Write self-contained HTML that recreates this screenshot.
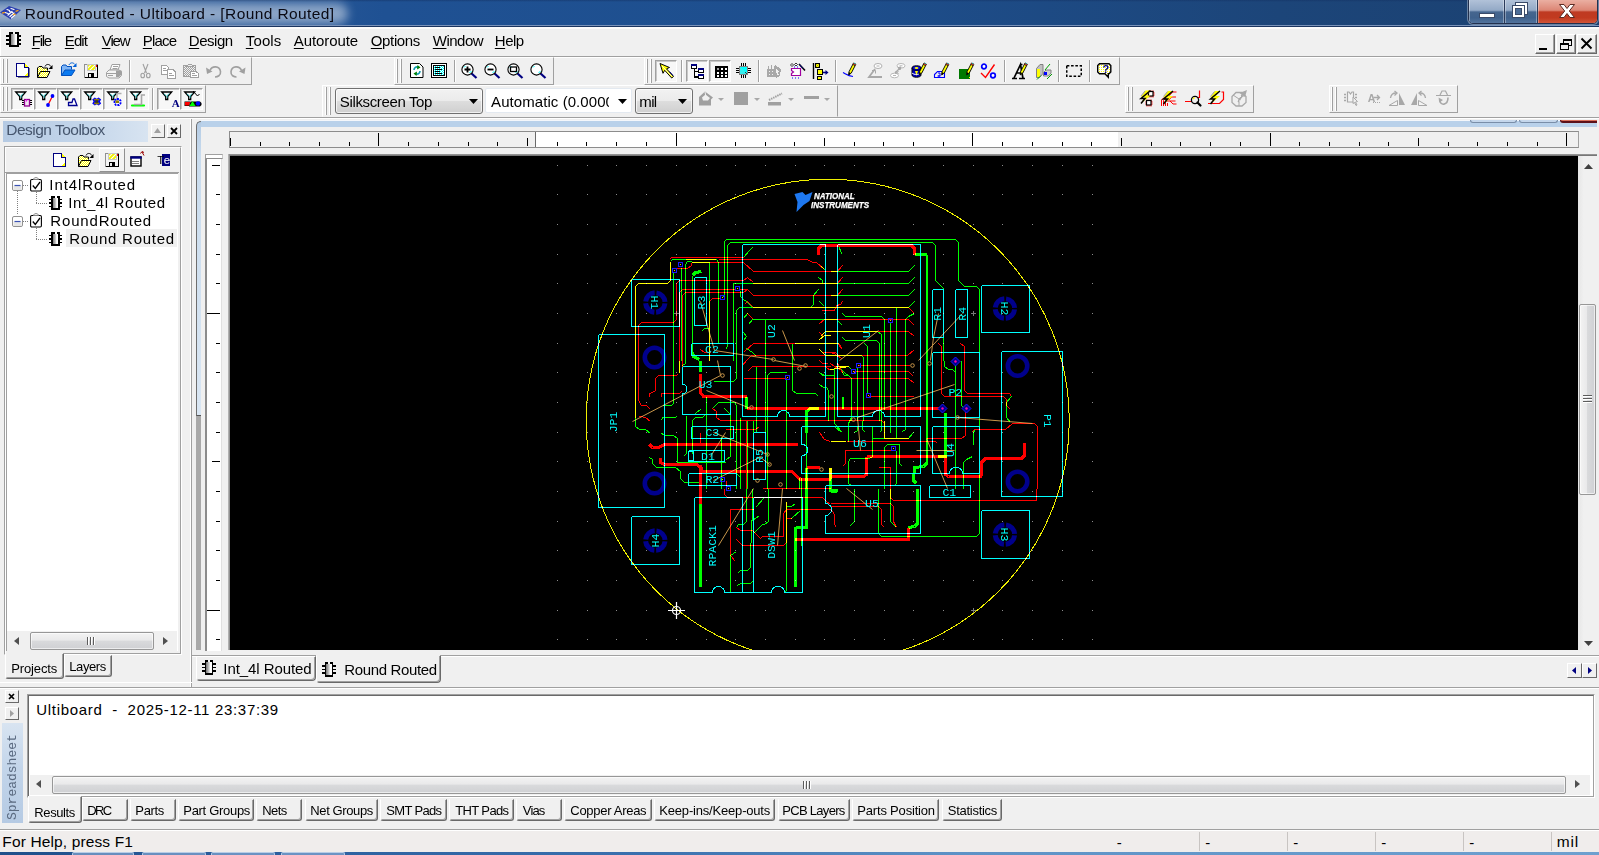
<!DOCTYPE html>
<html lang="en"><head><meta charset="utf-8"><title>RoundRouted - Ultiboard - [Round Routed]</title>
<style>
html,body{margin:0;padding:0}
body{width:1599px;height:855px;overflow:hidden;background:#f0f0f0;position:relative;font-family:"Liberation Sans",sans-serif;font-size:15px;color:#000}
div,span.t,svg{position:absolute;box-sizing:border-box}
span.t{white-space:pre;display:block}
u{text-decoration:underline;text-underline-offset:2px;text-decoration-thickness:1px}
.tb{border:1px solid;border-color:#fff #a0a0a0 #a0a0a0 #fff;background:#f0f0f0}
.grip{border-left:1px solid #fff;border-right:1px solid #a0a0a0}
.sunk{border:1px solid;border-color:#a0a0a0 #fff #fff #a0a0a0}
.rais{border:1px solid;border-color:#fff #696969 #696969 #fff;background:#f0f0f0}
svg{overflow:visible}

</style></head>
<body>
<!-- titlebar -->
<div style="left:0px;top:0px;width:1599px;height:27px;background:linear-gradient(to right,#3d679f 0,#1f5193 24%,#1e4f8e 50%,#1c4579 80%,#1b4171 100%);"></div>
<div style="left:0px;top:0px;width:1599px;height:2px;background:linear-gradient(to bottom,rgba(20,50,100,.55),rgba(20,50,100,0));"></div>
<div style="left:-14px;top:3px;width:362px;height:21px;background:rgba(255,255,255,.46);filter:blur(5px);border-radius:11px;"></div>
<div style="left:0px;top:25px;width:1599px;height:1px;background:#7a93ba"></div>
<div style="left:0px;top:26px;width:1599px;height:1px;background:#1b3560"></div>
<svg style="left:0;top:5px" width="22" height="16" viewBox="0 0 22 16">
<polygon points="0,7.5 9,1 21,5 11,14.5" fill="#2b3fb0"/>
<g stroke="#fff" stroke-width="1.2" stroke-linecap="round"><path d="M7 4.5l2.5 1M11 3.5l3 1M5 7.5l3 1M9.5 6.5l3 1M8 10l4-3.5M10 11.5l4-3.5M11.5 13l3.5-3"/></g>
<g stroke="#f5a21a" stroke-width="1.4"><path d="M2 8.2l3-.9M15.5 6.3l3-.9M13 9.8l2.5-.8"/></g>
</svg>
<span class="t" style="left:24.80px;top:3.88px;font-size:15.5px;line-height:19.5px;letter-spacing:0.397px;color:#0a0a14;">RoundRouted - Ultiboard - [Round Routed]</span>
<div style="left:1468px;top:-1px;width:130px;height:25px;border:1px solid #22304e;border-radius:0 0 5px 5px;background:#9fb3cf;box-shadow:0 0 0 1px rgba(255,255,255,.35);overflow:hidden"><div style="left:0px;top:-1px;width:36px;height:25px;background:linear-gradient(to bottom,#b4c4da 0,#93a9c6 45%,#46668f 52%,#3f618c 75%,#5576a0 100%);border-right:1px solid #2a3a5a;box-shadow:inset 0 0 0 1px rgba(255,255,255,.35)"></div><div style="left:36px;top:-1px;width:33px;height:25px;background:linear-gradient(to bottom,#b4c4da 0,#93a9c6 45%,#46668f 52%,#3f618c 75%,#5576a0 100%);border-right:1px solid #2a3a5a;box-shadow:inset 0 0 0 1px rgba(255,255,255,.35)"></div><div style="left:69px;top:-1px;width:60px;height:25px;background:linear-gradient(to bottom,#ecb3a6 0,#dc8675 45%,#bf3a22 52%,#c13a20 75%,#d4593c 100%);box-shadow:inset 0 0 0 1px rgba(255,255,255,.3)"></div></div>
<svg style="left:1468px;top:0" width="130" height="24" viewBox="0 0 130 24">
<rect x="11.500" y="13.500" width="15" height="4" fill="#fff" stroke="#3a4a68" stroke-width="1"/>
<g fill="none" stroke="#3a4a68" stroke-width="1"><rect x="47.500" y="2.500" width="12" height="12" fill="#fff"/><rect x="50.500" y="5.500" width="6" height="6" fill="#7f97b8"/>
<rect x="44.500" y="5.500" width="12" height="12" fill="#fff"/><rect x="47.500" y="8.500" width="6" height="6" fill="#4d6d97"/></g>
<path d="M91.500 4.500h4.500l3 4 3-4h4.500l-5.200 6.500 5.200 6.500h-4.500l-3-4-3 4h-4.500l5.200-6.500z" fill="#fff" stroke="#5a2a22" stroke-width="1" stroke-linejoin="round"/>
</svg>
<!-- menubar -->
<div style="left:0px;top:27px;width:1599px;height:2px;background:#fbfbfb"></div>
<div style="left:0px;top:27px;width:1px;height:29px;background:#fff"></div>
<div style="left:0px;top:56px;width:1599px;height:1px;background:#a0a0a0"></div>
<div style="left:0px;top:57px;width:1599px;height:1px;background:#fff"></div>
<svg style="left:6px;top:32px" width="16" height="16" viewBox="0 0 16 16" shape-rendering="crispEdges">
<defs><linearGradient id="cg0" x1="0" x2="1" y1="0" y2="0"><stop offset="0" stop-color="#666"/><stop offset=".5" stop-color="#c8c8c8"/><stop offset=".7" stop-color="#fff"/></linearGradient></defs>
<path d="M0 4h4M0 8h4M0 12h4M12 4h3M12 8h3M12 12h3" stroke="#000" stroke-width="2"/>
<rect x="4" y="1" width="8" height="13" fill="url(#cg0)" stroke="#000" stroke-width="2"/>
<rect x="7" y="0" width="2" height="2" fill="#f0f0f0"/>
</svg>
<span class="t" style="left:31.80px;top:30.80px;font-size:15px;line-height:19px;letter-spacing:-1.276px;color:#000;"><u>F</u>ile</span>
<span class="t" style="left:64.80px;top:30.80px;font-size:15px;line-height:19px;letter-spacing:-0.893px;color:#000;"><u>E</u>dit</span>
<span class="t" style="left:101.80px;top:30.80px;font-size:15px;line-height:19px;letter-spacing:-1.136px;color:#000;"><u>V</u>iew</span>
<span class="t" style="left:142.80px;top:30.80px;font-size:15px;line-height:19px;letter-spacing:-0.795px;color:#000;"><u>P</u>lace</span>
<span class="t" style="left:188.80px;top:30.80px;font-size:15px;line-height:19px;letter-spacing:-0.470px;color:#000;"><u>D</u>esign</span>
<span class="t" style="left:245.80px;top:30.80px;font-size:15px;line-height:19px;letter-spacing:0.121px;color:#000;"><u>T</u>ools</span>
<span class="t" style="left:293.80px;top:30.80px;font-size:15px;line-height:19px;letter-spacing:-0.088px;color:#000;"><u>A</u>utoroute</span>
<span class="t" style="left:370.80px;top:30.80px;font-size:15px;line-height:19px;letter-spacing:-0.366px;color:#000;"><u>O</u>ptions</span>
<span class="t" style="left:432.80px;top:30.80px;font-size:15px;line-height:19px;letter-spacing:-0.503px;color:#000;"><u>W</u>indow</span>
<span class="t" style="left:494.80px;top:30.80px;font-size:15px;line-height:19px;letter-spacing:-0.502px;color:#000;"><u>H</u>elp</span>
<div style="left:1535px;top:34px;width:20px;height:20px;border:1px solid;border-color:#fff #696969 #696969 #fff;box-shadow:inset -1px -1px 0 #a0a0a0;background:#f0f0f0"></div>
<div style="left:1556px;top:34px;width:20px;height:20px;border:1px solid;border-color:#fff #696969 #696969 #fff;box-shadow:inset -1px -1px 0 #a0a0a0;background:#f0f0f0"></div>
<div style="left:1577px;top:34px;width:20px;height:20px;border:1px solid;border-color:#fff #696969 #696969 #fff;box-shadow:inset -1px -1px 0 #a0a0a0;background:#f0f0f0"></div>
<svg style="left:1535px;top:34px" width="64" height="20" viewBox="0 0 64 20" shape-rendering="crispEdges">
<rect x="4" y="14" width="8" height="2" fill="#000"/>
<g fill="none" stroke="#000"><rect x="28.500" y="5.500" width="8" height="6"/><path d="M28.500 6.500h8" /><rect x="25.500" y="9.500" width="8" height="6" fill="#f0f0f0"/><path d="M25.500 10.500h8"/></g>
</svg>
<svg style="left:1577px;top:34px" width="20" height="20" viewBox="0 0 20 20"><path d="M4.500 4.500l10 10M14.500 4.500l-10 10" stroke="#000" stroke-width="1.900" fill="none"/></svg>
<!-- toolbars -->
<div class="tb" style="left:0px;top:57px;width:252px;height:28px;"></div><div class="grip" style="left:2px;top:59px;width:2px;height:24px;"></div><div class="grip" style="left:6px;top:59px;width:2px;height:24px;"></div>
<svg style="left:16px;top:63px" width="16" height="16" viewBox="0 0 16 16" shape-rendering="crispEdges"><path d="M2 13.500h11v1h-11zM13 5v9h1v-9z" fill="#808080"/><path d="M.500 .500h8l4 4v8.500h-12z" fill="#fff" stroke="#000080"/><path d="M8.500 .500v4h4" fill="#ff0" stroke="#000080"/><path d="M12 9v3.500h-3.500z" fill="#ff0"/></svg>
<svg style="left:37px;top:63px" width="17" height="16" viewBox="0 0 17 16"><defs><pattern id="dy" width="2" height="2" patternUnits="userSpaceOnUse"><rect width="2" height="2" fill="#ff0"/><rect width="1" height="1" fill="#fff"/><rect x="1" y="1" width="1" height="1" fill="#fff"/></pattern></defs>
<path d="M.500 14.500v-9.500l1.500-1.500h3l1 1.500h4.500v2.500" fill="url(#dy)" stroke="#000"/><path d="M.500 14.500l3-6h9.500l-3 6z" fill="url(#dy)" stroke="#000"/>
<path d="M8 3.500c1-2.500 4-3 6 0" fill="none" stroke="#000"/><path d="M15.500 2v4h-4z" fill="#000"/></svg>
<svg style="left:61px;top:62px" width="17" height="16" viewBox="0 0 17 16"><path d="M.500 13.500v-9l1.500-1.500h3l1 1.500h4.500v3" fill="#7fb5f5" stroke="#0050c0"/><path d="M.500 13.500l3.500-5.500h10l-3.500 5.500z" fill="#0a7af0" stroke="#0050c0"/>
<path d="M8 3c1-2.500 4-3 6-.5" fill="none" stroke="#0060d8"/><path d="M15.500 1v4h-4z" fill="#0060d8"/></svg>
<svg style="left:84px;top:64px" width="15" height="15" viewBox="0 0 15 15" shape-rendering="crispEdges"><defs><pattern id="hy" width="3" height="3" patternUnits="userSpaceOnUse" patternTransform="rotate(45)"><rect width="3" height="3" fill="#fff"/><rect width="1.500" height="3" fill="#f0f000"/></pattern></defs>
<rect x=".5" y=".5" width="13" height="13" fill="#f4f4f4" stroke="#909090"/><path d="M1 13.500h13M13.500 1v13" stroke="#000" fill="none"/><rect x="3.500" y=".5" width="8" height="6" fill="url(#hy)" stroke="#c8c8c8"/>
<rect x="12" y="1" width="1" height="2" fill="#f00"/><rect x="4" y="9" width="6" height="5" fill="#000"/><rect x="5" y="10" width="2" height="3" fill="#e8e8e8"/></svg>
<svg style="left:106px;top:64px" width="17" height="15" viewBox="0 0 17 15"><path d="M4 6l2-5.500h8l-2 5.500z" fill="#fff" stroke="#a0a0a0"/><path d="M7 2.500h5M6.500 4.500h5" stroke="#a0a0a0"/>
<path d="M.500 12.500v-4l2.500-2.500h10l2.500 1.500v4l-2.500 2.500h-10z" fill="#f4f4f4" stroke="#a0a0a0"/><path d="M10 6.500h5.500v4l-2.500 2.500h-3z" fill="#a0a0a0"/><path d="M1 9.500h9M2 11.500h5" stroke="#a0a0a0"/></svg>
<div style="left:129px;top:60px;width:1px;height:22px;background:#a0a0a0"></div><div style="left:130px;top:60px;width:1px;height:22px;background:#fff"></div>
<svg style="left:140px;top:64px" width="12" height="15" viewBox="0 0 12 15"><g fill="none" stroke="#a0a0a0" stroke-width="1.100"><path d="M3 0l3.500 9M8 0l-3.500 9"/><ellipse cx="2.700" cy="11.500" rx="1.800" ry="2.300"/><ellipse cx="8.300" cy="11.500" rx="1.800" ry="2.300"/></g></svg>
<svg style="left:161px;top:65px" width="16" height="14" viewBox="0 0 16 14" shape-rendering="crispEdges"><g fill="#fff" stroke="#a0a0a0"><path d="M.500 .500h5l2 2v6.500h-7z"/><path d="M6.500 4.500h5.500l2.500 2.500v6h-8z"/></g><path d="M2 3.500h3M2 5.500h4M8 8.500h3M8 10.500h5" stroke="#a0a0a0"/></svg>
<svg style="left:183px;top:64px" width="17" height="15" viewBox="0 0 17 15" shape-rendering="crispEdges"><defs><pattern id="dg" width="2" height="2" patternUnits="userSpaceOnUse"><rect width="2" height="2" fill="#f0f0f0"/><rect width="1" height="1" fill="#a0a0a0"/><rect x="1" y="1" width="1" height="1" fill="#a0a0a0"/></pattern></defs>
<rect x=".5" y="1.500" width="12" height="11" fill="url(#dg)" stroke="#a0a0a0"/><path d="M4 2.500l1.500-2h3l1.500 2z" fill="#f0f0f0" stroke="#a0a0a0"/>
<path d="M7.500 7.500h5.500l2.500 2v4h-8z" fill="#fff" stroke="#a0a0a0"/><path d="M9 9.500h3M9 11.500h5" stroke="#a0a0a0"/></svg>
<svg style="left:206px;top:64px" width="17" height="15" viewBox="0 0 17 15"><path d="M4 6.500c2-5 9.500-5 10.500 1c.5 4-3 5.500-5.500 5.500" fill="none" stroke="#a0a0a0" stroke-width="1.600"/><path d="M0 3.500l1 6.500 5.500-2.500z" fill="#a0a0a0"/></svg>
<svg style="left:229px;top:64px" width="17" height="15" viewBox="0 0 17 15"><path d="M12.500 6.500c-2-5-9.500-5-10.500 1c-.5 4 3 5.500 5.500 5.500" fill="none" stroke="#a0a0a0" stroke-width="1.600"/><path d="M16.500 3.500l-1 6.500-5.500-2.500z" fill="#a0a0a0"/></svg>
<div class="tb" style="left:394px;top:57px;width:160px;height:28px;"></div><div class="grip" style="left:396px;top:59px;width:2px;height:24px;"></div><div class="grip" style="left:400px;top:59px;width:2px;height:24px;"></div>
<svg style="left:410px;top:63px" width="14" height="15" viewBox="0 0 14 15"><path d="M.500 .500h9l3.500 3.500v10.500h-12.500z" fill="#fff" stroke="#000"/><path d="M1 14.500h12" stroke="#000"/>
<g fill="none" stroke-width="1.600"><path d="M4 7c0-2.500 2.500-4 5-2.500" stroke="#0a9ab0"/><path d="M10 8c0 2.500-2.500 4-5 2.500" stroke="#0a9ab0"/></g><path d="M7.500 2l3 2.500-3.500 2z" fill="#008000"/><path d="M6.500 13l-3-2.500 3.500-2z" fill="#008000"/></svg>
<svg style="left:431px;top:63px" width="16" height="15" viewBox="0 0 16 15" shape-rendering="crispEdges"><defs><pattern id="dc" width="2" height="2" patternUnits="userSpaceOnUse"><rect width="2" height="2" fill="#0ff"/><rect width="1" height="1" fill="#fff"/><rect x="1" y="1" width="1" height="1" fill="#fff"/></pattern></defs>
<rect x=".5" y=".5" width="15" height="14" fill="#fff" stroke="#000"/><rect x="2.500" y="2.500" width="11" height="10" fill="url(#dc)" stroke="#000"/><path d="M4 4.500h5M4 6.500h7M4 8.500h5M4 10.500h7" stroke="#000"/></svg>
<div style="left:454px;top:60px;width:1px;height:22px;background:#a0a0a0"></div><div style="left:455px;top:60px;width:1px;height:22px;background:#fff"></div>
<svg style="left:461px;top:62.5px" width="17" height="17" viewBox="0 0 17 17"><path d="M10 10l5.500 5" stroke="#000080" stroke-width="2.200" fill="none"/><circle cx="6.500" cy="6.500" r="5.600" fill="#fff" stroke="#000" stroke-width="1.100"/><path d="M3 4.500l1.500-1.500M8.500 10l2-2" stroke="#0ff"/><path d="M3.500 6.500h6M6.500 3.500v6" stroke="#000" stroke-width="1.800"/></svg>
<svg style="left:484px;top:62.5px" width="17" height="17" viewBox="0 0 17 17"><path d="M10 10l5.500 5" stroke="#000080" stroke-width="2.200" fill="none"/><circle cx="6.500" cy="6.500" r="5.600" fill="#fff" stroke="#000" stroke-width="1.100"/><path d="M3 4.500l1.500-1.500M8.500 10l2-2" stroke="#0ff"/><path d="M3.500 6.500h6" stroke="#000" stroke-width="1.800"/></svg>
<svg style="left:507px;top:62.5px" width="17" height="17" viewBox="0 0 17 17"><path d="M10 10l5.500 5" stroke="#000080" stroke-width="2.200" fill="none"/><circle cx="6.500" cy="6.500" r="5.600" fill="#fff" stroke="#000" stroke-width="1.100"/><path d="M3 4.500l1.500-1.500M8.500 10l2-2" stroke="#0ff"/><rect x="3.500" y="4" width="6" height="4.500" fill="none" stroke="#000" stroke-width="1.300"/></svg>
<svg style="left:530px;top:62.5px" width="17" height="17" viewBox="0 0 17 17"><path d="M10 10l5.500 5" stroke="#000080" stroke-width="2.200" fill="none"/><circle cx="6.500" cy="6.500" r="5.600" fill="#fff" stroke="#000" stroke-width="1.100"/><path d="M3 4.500l1.500-1.500M8.500 10l2-2" stroke="#0ff"/></svg>
<div class="tb" style="left:644px;top:57px;width:476px;height:28px;"></div><div class="grip" style="left:646px;top:59px;width:2px;height:24px;"></div><div class="grip" style="left:650px;top:59px;width:2px;height:24px;"></div>
<div style="left:655px;top:60px;width:22px;height:22px;background:#f7f7f7;border:1px solid;border-color:#a0a0a0 #fff #fff #a0a0a0;box-shadow:inset 1px 1px 0 #c8c8c8"></div>
<svg style="left:659px;top:63px" width="16" height="16" viewBox="0 0 16 16"><path d="M1 .500l9.500 4-3 1.300 7 7.700-1.800 1.500-7-7.700-1.700 3z" fill="#ff0" stroke="#000" stroke-width="1" stroke-linejoin="round"/><path d="M3 3l10 10.500" stroke="#fff" stroke-width=".8"/><path d="M10.500 8.500l3.500 4" stroke="#000080" stroke-width="1"/></svg>
<div style="left:681px;top:60px;width:1px;height:22px;background:#a0a0a0"></div><div style="left:682px;top:60px;width:1px;height:22px;background:#fff"></div>
<div style="left:686px;top:60px;width:22px;height:22px;background:#f7f7f7;border:1px solid;border-color:#a0a0a0 #fff #fff #a0a0a0;box-shadow:inset 1px 1px 0 #c8c8c8"></div>
<div style="left:709px;top:60px;width:22px;height:22px;background:#f7f7f7;border:1px solid;border-color:#a0a0a0 #fff #fff #a0a0a0;box-shadow:inset 1px 1px 0 #c8c8c8"></div>
<svg style="left:691px;top:63px" width="14" height="16" viewBox="0 0 14 16" shape-rendering="crispEdges"><path d="M3.500 5v9h4M3.500 8.500h4" fill="none" stroke="#000" stroke-width="1.200"/><g fill="#fff" stroke="#000"><rect x=".5" y="1.500" width="5" height="4"/><rect x="7.500" y="5.500" width="5" height="4"/><rect x="7.500" y="11.500" width="5" height="4"/></g><path d="M0 1h6v2h-6zM7 5h6v2h-6zM7 11h6v2h-6z" fill="#000080"/></svg>
<svg style="left:715px;top:66px" width="13" height="12" viewBox="0 0 13 12" shape-rendering="crispEdges"><rect width="13" height="12" fill="#000"/><g fill="#fff"><rect x="2" y="2" width="2" height="2" fill="#a0a0a0"/><rect x="6" y="2" width="2" height="2"/><rect x="10" y="2" width="2" height="2"/><rect x="2" y="6" width="2" height="2"/><rect x="6" y="6" width="2" height="2"/><rect x="10" y="6" width="2" height="2"/><rect x="2" y="9" width="2" height="2"/><rect x="6" y="9" width="2" height="2"/><rect x="10" y="9" width="2" height="2"/></g></svg>
<svg style="left:736px;top:63px" width="16" height="15" viewBox="0 0 16 15" shape-rendering="crispEdges"><path d="M5.500 0v15M7.500 0v15M9.500 0v15M0 5.500h15M0 7.500h15M0 9.500h15" stroke="#000"/><path d="M5 3v9M7 3v9M9 3v9M3 5h9M3 7h9M3 9h9" stroke="#c8a000"/><rect x="3.500" y="3.500" width="8" height="8" fill="#3ee" stroke="#808080"/><path d="M4 4h7v7z" fill="#0ff"/><path d="M9 9l2 2" stroke="#404040"/></svg>
<div style="left:758px;top:60px;width:1px;height:22px;background:#a0a0a0"></div><div style="left:759px;top:60px;width:1px;height:22px;background:#fff"></div>
<svg style="left:766px;top:63px" width="16" height="16" viewBox="0 0 16 16" shape-rendering="crispEdges"><g fill="#a8a8a8"><path d="M1 6h9v8h-9zM9 2l6 4-1 7-4 2z"/><path d="M2 3h1v3h-1zM5 2h1v4h-1zM8 3h1v3h-1z"/></g><g fill="#f0f0f0"><rect x="3" y="8" width="1" height="1"/><rect x="6" y="8" width="1" height="1"/><rect x="3" y="11" width="1" height="1"/><rect x="6" y="11" width="1" height="1"/><path d="M10 6l3 3-1.500 .5 1 2-1 .5-1-2-1 1z"/></g></svg>
<svg style="left:789px;top:63px" width="17" height="16" viewBox="0 0 17 16"><path d="M2.500 5.500h9v7h-9v-2l2-1.500-2-1.500z" fill="#fff" stroke="#a000a0" stroke-width="1.200"/><path d="M3 15h1M6 15h1M9 15h1M5 4h1M8 4h1" stroke="#00f"/><path d="M10 1l6 6.500" stroke="#000" stroke-width="1.600"/><path d="M10.500 1.500l3.500 4" stroke="#000080"/><path d="M1.500 2l1.500-1.500 1.500 1.500-1.500 1.500zM5.500 1.500l1.500-1.500 1.500 1.500-1.500 1.500z" fill="#fff" stroke="#000" stroke-width=".8"/></svg>
<svg style="left:812px;top:63px" width="17" height="17" viewBox="0 0 17 17"><path d="M1.500 0v16" stroke="#000" stroke-width="1.400"/><g fill="#ff0" stroke="#000"><rect x="3.500" y=".5" width="4" height="4"/><rect x="5.500" y="6.500" width="5" height="5"/><rect x="5.500" y="13.500" width="4" height="3"/></g><path d="M4 1l3 3M7 1l-3 3" stroke="#a0a000" stroke-width=".6"/><path d="M11 9.500h3" stroke="#000080" stroke-width="1.600"/><path d="M13.500 7l3 2.500-3 2.500z" fill="#000080"/></svg>
<div style="left:835px;top:60px;width:1px;height:22px;background:#a0a0a0"></div><div style="left:836px;top:60px;width:1px;height:22px;background:#fff"></div>
<svg style="left:843px;top:63px" width="17" height="16" viewBox="0 0 17 16"><path d="M0 9.500c3 1.500 5 3.500 10 4" fill="none" stroke="#00f" stroke-width="1.100"/><g transform="translate(5.5 0) scale(.92)"><path d="M5.500 0l2.500 1.300-5 9.700-2.800 2 .3-3.400z" fill="#ff0" stroke="#000" stroke-width="1"/><path d="M4.700 1.500l2.500 1.300" stroke="#000"/><path d="M5.500 0l2.500 1.300-.7 1.400-2.500-1.300z" fill="#c03030"/><path d="M6 0l1.500 .8" stroke="#0cc"/><path d="M.5 10l2 1-2.300 2z" fill="#000"/></g></svg>
<svg style="left:867px;top:63px" width="16" height="16" viewBox="0 0 16 16"><ellipse cx="11" cy="3" rx="4" ry="2.500" fill="#fff" stroke="#b0b0b0"/><path d="M9.500 3h3" stroke="#b0b0b0"/><path d="M8 6l-6 8h13" fill="none" stroke="#a8a8a8" stroke-width="1.800"/><path d="M5 7.500h3.500v3" fill="none" stroke="#a8a8a8"/></svg>
<svg style="left:890px;top:63px" width="16" height="16" viewBox="0 0 16 16"><ellipse cx="11" cy="2.800" rx="4" ry="2.300" fill="#fff" stroke="#b8b8b8"/><ellipse cx="4.500" cy="12.500" rx="4" ry="2.300" fill="#fff" stroke="#b8b8b8"/><path d="M9.500 2.800h3M3 12.500h3" stroke="#b8b8b8"/><path d="M5 10l5-5" stroke="#a8a8a8" stroke-width="1.300"/><path d="M8 4.500l3-.5-1 3zM5.500 8l3 3M8.500 8l-3 3" stroke="#a8a8a8" fill="#a8a8a8"/></svg>
<svg style="left:911px;top:63px" width="18" height="16" viewBox="0 0 18 16"><path d="M1 5v7c0 3 9 3 9 0v-7z" fill="#0000c0" stroke="#000"/><ellipse cx="5.500" cy="5" rx="4.500" ry="2.200" fill="#0000e0" stroke="#000"/><ellipse cx="5.500" cy="5" rx="2" ry="1" fill="#ff0"/><path d="M4 8l1.500 5 1.500-5z" fill="#ff0"/><path d="M1 10c2 2 7 2 9 0" stroke="#fff" fill="none"/><g transform="translate(8 0) scale(.92)"><path d="M5.500 0l2.500 1.300-5 9.700-2.800 2 .3-3.400z" fill="#ff0" stroke="#000" stroke-width="1"/><path d="M4.700 1.500l2.500 1.300" stroke="#000"/><path d="M5.500 0l2.500 1.300-.7 1.400-2.500-1.300z" fill="#c03030"/><path d="M6 0l1.500 .8" stroke="#0cc"/><path d="M.5 10l2 1-2.300 2z" fill="#000"/></g></svg>
<svg style="left:934px;top:63px" width="17" height="16" viewBox="0 0 17 16"><path d="M.500 14.500v-3l3-3h5l2 2v4z" fill="none" stroke="#00f" stroke-width="1.100"/><path d="M4 10h2v3h-2M3.500 13h3" stroke="#00f" fill="none"/><g transform="translate(7.5 0) scale(.92)"><path d="M5.500 0l2.500 1.300-5 9.700-2.800 2 .3-3.400z" fill="#ff0" stroke="#000" stroke-width="1"/><path d="M4.700 1.500l2.500 1.300" stroke="#000"/><path d="M5.500 0l2.500 1.300-.7 1.400-2.500-1.300z" fill="#c03030"/><path d="M6 0l1.500 .8" stroke="#0cc"/><path d="M.5 10l2 1-2.300 2z" fill="#000"/></g></svg>
<svg style="left:959px;top:63px" width="17" height="16" viewBox="0 0 17 16"><rect x="0" y="6" width="11" height="10" fill="#007800"/><path d="M10 14l1 1" stroke="#ff0"/><g transform="translate(7.5 0) scale(.92)"><path d="M5.500 0l2.500 1.300-5 9.700-2.800 2 .3-3.400z" fill="#ff0" stroke="#000" stroke-width="1"/><path d="M4.700 1.500l2.500 1.300" stroke="#000"/><path d="M5.500 0l2.500 1.300-.7 1.400-2.500-1.300z" fill="#c03030"/><path d="M6 0l1.500 .8" stroke="#0cc"/><path d="M.5 10l2 1-2.300 2z" fill="#000"/></g></svg>
<svg style="left:980px;top:63px" width="17" height="16" viewBox="0 0 17 16"><circle cx="4" cy="3.500" r="2.300" fill="#fff" stroke="#00f" stroke-width="1.700"/><circle cx="13" cy="12.500" r="2.300" fill="#fff" stroke="#00f" stroke-width="1.700"/><path d="M1 10l4.500 4.500 9-13" fill="none" stroke="#f00" stroke-width="1.400"/></svg>
<div style="left:1004px;top:60px;width:1px;height:22px;background:#a0a0a0"></div><div style="left:1005px;top:60px;width:1px;height:22px;background:#fff"></div>
<svg style="left:1012px;top:63px" width="17" height="16" viewBox="0 0 17 16"><path d="M0 15.500h5M7 15.500h6M2 15l6.500-13.500 2.500 14M5 10h5" fill="none" stroke="#000" stroke-width="1.700"/><path d="M8.500 1.500h2" stroke="#000" stroke-width="1.400"/><g transform="translate(8 0) scale(.92)"><path d="M5.500 0l2.500 1.300-5 9.700-2.800 2 .3-3.400z" fill="#ff0" stroke="#000" stroke-width="1"/><path d="M4.700 1.500l2.500 1.300" stroke="#000"/><path d="M5.500 0l2.500 1.300-.7 1.400-2.500-1.300z" fill="#c03030"/><path d="M6 0l1.500 .8" stroke="#0cc"/><path d="M.5 10l2 1-2.300 2z" fill="#000"/></g></svg>
<svg style="left:1036px;top:63px" width="17" height="17" viewBox="0 0 17 17"><path d="M.500 5.500l3.500-4h3v9l-3.500 4h-3z" fill="#c0c0c0" stroke="#808080"/><rect x="1" y="6" width="3" height="8" fill="#ff0"/><path d="M7.500 9.500l2.500-2.500h5v3l-2.500 3h-5z" fill="#d0d0d0" stroke="#808080"/><rect x="8" y="9" width="3" height="3" fill="#00f"/><path d="M9 7l5-6M1 16.500l4-4M11 16l5-5" stroke="#00a000" stroke-width="1"/></svg>
<div style="left:1058px;top:60px;width:1px;height:22px;background:#a0a0a0"></div><div style="left:1059px;top:60px;width:1px;height:22px;background:#fff"></div>
<svg style="left:1066px;top:65px" width="16" height="12" viewBox="0 0 16 12"><rect x=".75" y=".75" width="14.500" height="10.500" fill="none" stroke="#000" stroke-width="1.500" stroke-dasharray="2.600 1.700"/></svg>
<div style="left:1089px;top:60px;width:1px;height:22px;background:#a0a0a0"></div><div style="left:1090px;top:60px;width:1px;height:22px;background:#fff"></div>
<svg style="left:1097px;top:63px" width="15" height="15" viewBox="0 0 15 15"><defs><pattern id="dq" width="2" height="2" patternUnits="userSpaceOnUse"><rect width="2" height="2" fill="#fff"/><rect width="1" height="1" fill="#ff0"/></pattern></defs><path d="M2.500 .7h9.500l1.800 1.800v6.500l-1.800 1.800h-.7v3.400l-3.400-3.400h-5.400l-1.800-1.800v-6.500z" fill="url(#dq)" stroke="#000" stroke-width="1.400"/></svg><span class="t" style="left:1102.60px;top:61.69px;font-size:11px;line-height:15px;letter-spacing:0.000px;color:#000080;font-weight:bold;">?</span>
<div class="tb" style="left:0px;top:85px;width:206px;height:28px;"></div><div class="grip" style="left:2px;top:87px;width:2px;height:24px;"></div><div class="grip" style="left:6px;top:87px;width:2px;height:24px;"></div>
<div style="left:11px;top:88px;width:23px;height:22px;background:#f7f7f7;border:1px solid;border-color:#a0a0a0 #fff #fff #a0a0a0;box-shadow:inset 1px 1px 0 #c8c8c8"></div><svg style="left:15px;top:91px" width="18" height="17" viewBox="0 0 18 17"><path d="M.700 1h10l-4 4.500v3h-2v-3z" fill="#fcfcfc" stroke="#000" stroke-width="1.300"/><path d="M3.200 2.800l2 2.200M8 2.500l-1.800 2.300v2" stroke="#0bb" stroke-width=".8" fill="none"/><path d="M7 9.500h10M7 11.500h10M7 13.500h10" stroke="#000"/><rect x="9.500" y="8.500" width="5" height="6.500" fill="#f4e4f4" stroke="#900090" stroke-width="1.300"/><path d="M11.500 8.500v2" stroke="#f0f"/></svg>
<div style="left:34px;top:88px;width:23px;height:22px;background:#f7f7f7;border:1px solid;border-color:#a0a0a0 #fff #fff #a0a0a0;box-shadow:inset 1px 1px 0 #c8c8c8"></div><svg style="left:38px;top:91px" width="18" height="17" viewBox="0 0 18 17"><path d="M.700 1h10l-4 4.500v3h-2v-3z" fill="#fcfcfc" stroke="#000" stroke-width="1.300"/><path d="M3.200 2.800l2 2.200M8 2.500l-1.800 2.300v2" stroke="#0bb" stroke-width=".8" fill="none"/><path d="M10 14l4.500-9" stroke="#f00" stroke-width="1.200"/><circle cx="14.500" cy="5" r="1.900" fill="#00f"/><circle cx="10" cy="14" r="1.900" fill="#00f"/></svg>
<div style="left:57px;top:88px;width:23px;height:22px;background:#f7f7f7;border:1px solid;border-color:#a0a0a0 #fff #fff #a0a0a0;box-shadow:inset 1px 1px 0 #c8c8c8"></div><svg style="left:61px;top:91px" width="18" height="17" viewBox="0 0 18 17"><path d="M.700 1h10l-4 4.500v3h-2v-3z" fill="#fcfcfc" stroke="#000" stroke-width="1.300"/><path d="M3.200 2.800l2 2.200M8 2.500l-1.800 2.300v2" stroke="#0bb" stroke-width=".8" fill="none"/><path d="M7.500 14.500v-3h3.500l1-3.500h1.500l2.500 6.500z" fill="#fff" stroke="#000090" stroke-width="1.300"/></svg>
<div style="left:80px;top:88px;width:23px;height:22px;background:#f7f7f7;border:1px solid;border-color:#a0a0a0 #fff #fff #a0a0a0;box-shadow:inset 1px 1px 0 #c8c8c8"></div><svg style="left:84px;top:91px" width="18" height="17" viewBox="0 0 18 17"><path d="M.700 1h10l-4 4.500v3h-2v-3z" fill="#fcfcfc" stroke="#000" stroke-width="1.300"/><path d="M3.200 2.800l2 2.200M8 2.500l-1.800 2.300v2" stroke="#0bb" stroke-width=".8" fill="none"/><g transform="translate(-3.300 -3.600) scale(1.280)"><path d="M9 9.500l2-1.700 1.500 1 1.500-1 2 1.700-1 1.500 1 1.500-2 1.700-1.500-1-1.500 1-2-1.700 1-1.500z" fill="#00f"/><rect x="10.500" y="9" width="4" height="1.200" fill="#908000"/><rect x="10.500" y="11.800" width="4" height="1.400" fill="#908000"/><rect x="11.500" y="10" width="2" height="2" fill="#404000"/></g></svg>
<div style="left:103px;top:88px;width:23px;height:22px;background:#f7f7f7;border:1px solid;border-color:#a0a0a0 #fff #fff #a0a0a0;box-shadow:inset 1px 1px 0 #c8c8c8"></div><svg style="left:107px;top:91px" width="18" height="17" viewBox="0 0 18 17"><path d="M.700 1h10l-4 4.500v3h-2v-3z" fill="#fcfcfc" stroke="#000" stroke-width="1.300"/><path d="M3.200 2.800l2 2.200M8 2.500l-1.800 2.300v2" stroke="#0bb" stroke-width=".8" fill="none"/><path d="M10 11v-8.500h4.500" fill="none" stroke="#b0b0b0" stroke-width="1.600"/><path d="M7.500 9.500l1.500-1.500h3l1.500 1.500v3l-1.500 1.500h-3l-1.500-1.500z" fill="none" stroke="#00f" stroke-width="1.800" stroke-dasharray="2 1"/><rect x="8.500" y="9.500" width="3.500" height="2.500" fill="#908000"/></svg>
<div style="left:126px;top:88px;width:23px;height:22px;background:#f7f7f7;border:1px solid;border-color:#a0a0a0 #fff #fff #a0a0a0;box-shadow:inset 1px 1px 0 #c8c8c8"></div><svg style="left:130px;top:91px" width="18" height="17" viewBox="0 0 18 17"><path d="M.700 1h10l-4 4.500v3h-2v-3z" fill="#fcfcfc" stroke="#000" stroke-width="1.300"/><path d="M3.200 2.800l2 2.200M8 2.500l-1.800 2.300v2" stroke="#0bb" stroke-width=".8" fill="none"/><path d="M2 14.500h12" stroke="#0f0" stroke-width="2.200" stroke-linecap="round"/><path d="M4 13.500h7.500v-9.500h3.500" fill="none" stroke="#a8a8a8" stroke-width="1.600"/></svg>
<div style="left:152px;top:88px;width:1px;height:22px;background:#a0a0a0"></div><div style="left:153px;top:88px;width:1px;height:22px;background:#fff"></div>
<div style="left:157px;top:88px;width:23px;height:22px;background:#f7f7f7;border:1px solid;border-color:#a0a0a0 #fff #fff #a0a0a0;box-shadow:inset 1px 1px 0 #c8c8c8"></div><svg style="left:161px;top:91px" width="18" height="17" viewBox="0 0 18 17"><path d="M.700 1h10l-4 4.500v3h-2v-3z" fill="#fcfcfc" stroke="#000" stroke-width="1.300"/><path d="M3.200 2.800l2 2.200M8 2.500l-1.800 2.300v2" stroke="#0bb" stroke-width=".8" fill="none"/></svg><span class="t" style="left:171.80px;top:96.19px;font-size:11px;line-height:15px;letter-spacing:0.000px;color:#000080;font-family:'Liberation Serif', serif;font-weight:bold;">A</span>
<div style="left:180px;top:88px;width:23px;height:22px;background:#f7f7f7;border:1px solid;border-color:#a0a0a0 #fff #fff #a0a0a0;box-shadow:inset 1px 1px 0 #c8c8c8"></div><svg style="left:184px;top:91px" width="18" height="17" viewBox="0 0 18 17"><path d="M.700 1h10l-4 4.500v3h-2v-3z" fill="#fcfcfc" stroke="#000" stroke-width="1.300"/><path d="M3.200 2.800l2 2.200M8 2.500l-1.800 2.300v2" stroke="#0bb" stroke-width=".8" fill="none"/><path d="M9 0l4.500 5 2-2" fill="none" stroke="#000" stroke-width="1"/><path d="M.500 10.500h5.500l-1 4.500h-4.500zM13 15.500h3l1.500-1.500v-2l-1.500-1.500h-9.500l-1.500 5z" fill="#000"/><path d="M1 11h5l-1 3.500h-4z" fill="#f00"/><path d="M8.500 10l3 5h-6z" fill="#0f0"/><circle cx="14" cy="12.500" r="2.200" fill="#00f"/></svg>
<!-- toolbars2 -->
<div style="left:322px;top:85px;width:516px;height:32px;border:1px solid;border-color:#fff #a0a0a0 transparent #fff;"></div>
<div class="grip" style="left:325px;top:87px;width:2px;height:28px;"></div><div class="grip" style="left:329px;top:87px;width:2px;height:28px;"></div>
<div style="left:335px;top:88px;width:148px;height:26px;border:1px solid #707070;border-radius:3px;background:linear-gradient(to bottom,#f2f2f2 0,#ebebeb 48%,#dddddd 52%,#cfcfcf 100%);box-shadow:inset 0 0 0 1px rgba(255,255,255,.7)"></div>
<span class="t" style="left:339.80px;top:91.70px;font-size:15px;line-height:19px;letter-spacing:-0.362px;color:#000;">Silkscreen Top</span>
<svg style="left:468.5px;top:99px" width="9" height="5" viewBox="0 0 9 5"><path d="M0 0h9l-4.500 5z" fill="#000"/></svg>
<div style="left:485px;top:88px;width:147px;height:25px;background:#fff;border:1px solid #e3e9f0;border-radius:2px"></div>
<div style="left:488px;top:89px;width:121px;height:23px;overflow:hidden"><span class="t" style="left:3.10px;top:2.70px;font-size:15px;line-height:19px;letter-spacing:0.069px;color:#000;">Automatic (0.0000</span></div>
<svg style="left:618px;top:99px" width="9" height="5" viewBox="0 0 9 5"><path d="M0 0h9l-4.500 5z" fill="#000"/></svg>
<div style="left:635px;top:88px;width:58px;height:26px;border:1px solid #707070;border-radius:3px;background:linear-gradient(to bottom,#f2f2f2 0,#ebebeb 48%,#dddddd 52%,#cfcfcf 100%);box-shadow:inset 0 0 0 1px rgba(255,255,255,.7)"></div>
<span class="t" style="left:639.30px;top:91.70px;font-size:15px;line-height:19px;letter-spacing:-0.664px;color:#000;">mil</span>
<svg style="left:678px;top:99px" width="9" height="5" viewBox="0 0 9 5"><path d="M0 0h9l-4.500 5z" fill="#000"/></svg>
<svg style="left:698px;top:91px" width="16" height="16" viewBox="0 0 16 16"><path d="M1 6l6-5.500 8 6-2 2v6h-12z" fill="#a0a0a0"/><path d="M4 6.500l3.500-3 4.500 3.500-2 2.500h-5z" fill="#f0f0f0"/><path d="M7 1l1 5" stroke="#f0f0f0"/></svg>
<svg style="left:718px;top:98px" width="6" height="3" viewBox="0 0 6 3"><path d="M0 0h6l-3 3z" fill="#a8a8a8"/></svg>
<svg style="left:734px;top:92px" width="14" height="13" viewBox="0 0 14 13" shape-rendering="crispEdges"><rect width="14" height="13" fill="#a0a0a0"/></svg>
<svg style="left:754px;top:98px" width="6" height="3" viewBox="0 0 6 3"><path d="M0 0h6l-3 3z" fill="#a8a8a8"/></svg>
<svg style="left:768px;top:91px" width="15" height="15" viewBox="0 0 15 15"><path d="M1 9l13-6.500" stroke="#a0a0a0" stroke-width="2" stroke-dasharray="1.500 .8"/><rect x="0" y="11" width="13" height="3.500" fill="#a0a0a0"/></svg>
<svg style="left:788px;top:98px" width="6" height="3" viewBox="0 0 6 3"><path d="M0 0h6l-3 3z" fill="#a8a8a8"/></svg>
<svg style="left:804px;top:96px" width="15" height="3" viewBox="0 0 15 3" shape-rendering="crispEdges"><rect width="15" height="3" fill="#a0a0a0"/></svg>
<svg style="left:824px;top:98px" width="6" height="3" viewBox="0 0 6 3"><path d="M0 0h6l-3 3z" fill="#a8a8a8"/></svg>
<div class="tb" style="left:1125px;top:85px;width:129px;height:28px;"></div><div class="grip" style="left:1127px;top:87px;width:2px;height:24px;"></div><div class="grip" style="left:1131px;top:87px;width:2px;height:24px;"></div>
<svg style="left:1140px;top:90px" width="16" height="17" viewBox="0 0 16 17"><rect x="8.500" y="1.500" width="5" height="5" fill="#fff" stroke="#f00" stroke-width="2.200" stroke-dasharray="1 1"/><rect x="6.500" y="10.500" width="5" height="5" fill="#fff" stroke="#f00" stroke-width="2.200" stroke-dasharray="1 1"/><rect x="8.500" y="1.500" width="4.500" height="4.500" fill="#fff" stroke="#000" stroke-width="1.200"/><rect x="6.500" y="10.500" width="4.500" height="4.500" fill="#fff" stroke="#000" stroke-width="1.200"/><g transform="translate(0.5 0.5)"><path d="M5 0h5l-4 5h4l-9.500 8 3.500-6.500h-3.500z" fill="#ff0"/><path d="M10 0l-9.500 8h4l-4 5" fill="none" stroke="#000" stroke-width="1.500"/><path d="M4.500 .5l-4 5" stroke="#a0a0a0"/></g></svg>
<svg style="left:1161px;top:90px" width="17" height="17" viewBox="0 0 17 17"><path d="M.500 16v-6l2-2h4l5-6h4M2.500 16v-5.500l1-1h5l2-2.500h4.500M4.500 16v-4l1-1h9M6.500 16v-3M9 11l3 3h3.500" fill="none" stroke="#f00" stroke-width="1"/><g transform="translate(2 1)"><path d="M5 0h5l-4 5h4l-9.500 8 3.500-6.500h-3.500z" fill="#ff0"/><path d="M10 0l-9.500 8h4l-4 5" fill="none" stroke="#000" stroke-width="1.500"/><path d="M4.500 .5l-4 5" stroke="#a0a0a0"/></g></svg>
<svg style="left:1185px;top:90px" width="17" height="17" viewBox="0 0 17 17"><path d="M0 11.500h7M12 7.500h2.500v-7" fill="none" stroke="#f00" stroke-width="1.200"/><circle cx="10" cy="10" r="3.600" fill="#f0f0f0" stroke="#000" stroke-width="1.300"/><path d="M8 9l1.500-1.500" stroke="#ff0" stroke-width="1.200"/><path d="M12.500 12.500l3 3" stroke="#000" stroke-width="2.200" stroke-linecap="round"/></svg>
<svg style="left:1208px;top:90px" width="17" height="16" viewBox="0 0 17 16"><path d="M0 13.500h11.500l4-4v-7.500h-2" fill="none" stroke="#f00" stroke-width="1.200"/><g transform="translate(2 1)"><path d="M5 0h5l-4 5h4l-9.500 8 3.500-6.500h-3.500z" fill="#ff0"/><path d="M10 0l-9.500 8h4l-4 5" fill="none" stroke="#000" stroke-width="1.500"/><path d="M4.500 .5l-4 5" stroke="#a0a0a0"/></g></svg>
<svg style="left:1231px;top:90px" width="17" height="17" viewBox="0 0 17 17"><path d="M5 2.500h6l4 4v6l-4 3.500h-6l-4-3.500v-6z" fill="none" stroke="#a8a8a8" stroke-width="1.300"/><path d="M2 5l6 4v7M8 9l6-4" fill="none" stroke="#a8a8a8"/><path d="M16 0l-7.500 3 2 1.500-4 7 1.500 1 4-7 2 1.500z" fill="#a8a8a8"/><path d="M9 6.500h1M11 9h1M8 11h1" stroke="#f0f0f0"/></svg>
<div class="tb" style="left:1329px;top:85px;width:129px;height:28px;"></div><div class="grip" style="left:1331px;top:87px;width:2px;height:24px;"></div><div class="grip" style="left:1335px;top:87px;width:2px;height:24px;"></div>
<svg style="left:1343px;top:91px" width="17" height="16" viewBox="0 0 17 16"><path d="M4.500 1v10h6v-10h-1.500l-1.500 2-1.500-2z" fill="#f4f4f4" stroke="#a8a8a8" stroke-width="1.200"/><path d="M1 3.500h2M1 6.500h2M1 9.500h2M12 3.500h2M12 6.500h2" stroke="#a8a8a8" stroke-width="1.600"/><path d="M10 6l4.500 4.500-2 .5 1.500 3-1 .5-1.500-3-1.500 1z" fill="#f0f0f0" stroke="#a8a8a8" stroke-width="1"/></svg>
<span class="t" style="left:1367.80px;top:91.11px;font-size:10.5px;line-height:14.5px;letter-spacing:0.000px;color:#a8a8a8;font-weight:bold;">A</span>
<svg style="left:1373px;top:94px" width="8" height="10" viewBox="0 0 8 10"><path d="M.500 3.500h5.500M4 1l2.500 2.500-2.500 2.500" fill="none" stroke="#a8a8a8" stroke-width="1.300"/><path d="M0 8.500h7" stroke="#a8a8a8" stroke-dasharray="1 1"/></svg>
<svg style="left:1389px;top:91px" width="17" height="15" viewBox="0 0 17 15"><path d="M10 2v12h6z" fill="#a8a8a8"/><path d="M0 14.500h8.500v-5z" fill="#f4f4f4" stroke="#a8a8a8"/><path d="M1.500 7c.5-3.500 3-5 5.500-5" fill="none" stroke="#a8a8a8" stroke-width="1.300"/><path d="M5.500 0l2.500 2-2.500 2.500" fill="none" stroke="#a8a8a8" stroke-width="1.300"/></svg>
<svg style="left:1411px;top:91px" width="17" height="15" viewBox="0 0 17 15"><path d="M6 2v12h-6z" fill="#a8a8a8"/><path d="M16 14.500h-8.500v-5z" fill="#f4f4f4" stroke="#a8a8a8"/><path d="M14.500 7c-.5-3.500-3-5-5.500-5" fill="none" stroke="#a8a8a8" stroke-width="1.300"/><path d="M10.500 0l-2.500 2 2.500 2.500" fill="none" stroke="#a8a8a8" stroke-width="1.300"/></svg>
<svg style="left:1436px;top:90px" width="16" height="16" viewBox="0 0 16 16"><path d="M0 5.500h15" stroke="#a8a8a8"/><path d="M4 5l2-4h3.500l2 4" fill="none" stroke="#a8a8a8" stroke-width="1.200"/><path d="M12 7.500c0 8-8 9-8.500 2" fill="none" stroke="#a8a8a8" stroke-width="1.600"/><path d="M2.500 7.500l1 5 3.500-2.500z" fill="#a8a8a8"/></svg>
<div style="left:0px;top:117px;width:1599px;height:1px;background:#a0a0a0"></div>
<div style="left:0px;top:118px;width:1599px;height:1px;background:#fff"></div>
<!-- leftpanel -->
<div style="left:3px;top:121px;width:145px;height:21px;background:linear-gradient(to right,#b5cae3 0,#c3d5ea 55%,#d8e4f1 100%)"></div>
<span class="t" style="left:6.30px;top:120.38px;font-size:15.5px;line-height:19.5px;letter-spacing:-0.518px;color:#46566e;">Design Toolbox</span>
<div class="rais" style="left:151px;top:124px;width:14px;height:14px;"></div><div class="rais" style="left:167px;top:124px;width:14px;height:14px;"></div>
<svg style="left:154px;top:128px" width="7" height="5" viewBox="0 0 7 5"><path d="M0 5l3.500-5 3.500 5z" fill="#a0a0a0"/></svg>
<svg style="left:170px;top:127px" width="8" height="8" viewBox="0 0 8 8"><path d="M1 1l6 6M7 1l-6 6" stroke="#000" stroke-width="1.800"/></svg>
<div style="left:4px;top:146px;width:178px;height:509px;border:1px solid;border-color:#a0a0a0 #fff #fff #a0a0a0"></div>
<div style="left:5px;top:147px;width:176px;height:507px;border:1px solid;border-color:#fff #a0a0a0 #a0a0a0 #fff"></div>
<svg style="left:53px;top:153px" width="14" height="15" viewBox="0 0 14 15" shape-rendering="crispEdges"><path d="M.500 .500h8l4 4v9h-12z" fill="#fff" stroke="#000080"/><path d="M8.500 .500v4h4" fill="#ff0" stroke="#000080"/><path d="M12 9v4h-4z" fill="#ff0"/></svg>
<svg style="left:78px;top:152px" width="17" height="16" viewBox="0 0 17 16"><defs><pattern id="dy2" width="2" height="2" patternUnits="userSpaceOnUse"><rect width="2" height="2" fill="#ff0"/><rect width="1" height="1" fill="#fff"/><rect x="1" y="1" width="1" height="1" fill="#fff"/></pattern></defs>
<path d="M.500 14.500v-9.500l1.500-1.500h3l1 1.500h4.500v2.500" fill="url(#dy2)" stroke="#000"/><path d="M.500 14.500l3-6h9.500l-3 6z" fill="url(#dy2)" stroke="#000"/>
<path d="M8 3.500c1-2.500 4-3 6 0" fill="none" stroke="#000"/><path d="M15.500 2v4h-4z" fill="#000"/></svg>
<div style="left:99px;top:148px;width:26px;height:24px;border:1px solid;border-color:#fff #909090 #909090 #fff;background:#f4f4f4"></div>
<svg style="left:105px;top:153px" width="15" height="15" viewBox="0 0 15 15" shape-rendering="crispEdges"><defs><pattern id="hy2" width="3" height="3" patternUnits="userSpaceOnUse" patternTransform="rotate(45)"><rect width="3" height="3" fill="#fff"/><rect width="1.500" height="3" fill="#f0f000"/></pattern></defs>
<rect x=".5" y=".5" width="13" height="13" fill="#f4f4f4" stroke="#909090"/><path d="M1 13.500h13M13.500 1v13" stroke="#000" fill="none"/><rect x="3.500" y=".5" width="8" height="6" fill="url(#hy2)" stroke="#c8c8c8"/>
<rect x="12" y="1" width="1" height="2" fill="#f00"/><rect x="4" y="9" width="6" height="5" fill="#000"/><rect x="5" y="10" width="2" height="3" fill="#e8e8e8"/></svg>
<svg style="left:130px;top:151px" width="16" height="16" viewBox="0 0 16 16"><rect x="1" y="6" width="10" height="9" fill="#fff" stroke="#000" stroke-width="1.400"/><rect x=".3" y="5.300" width="11.400" height="2.400" fill="#000080"/><path d="M2 10.500h7M2 12.500h7" stroke="#808080"/><path d="M14 4.500l-2-3.500M10.500 2.500l1.500-2 2 1" fill="none" stroke="#900" stroke-width="1"/></svg>
<div style="left:162px;top:154px;width:8px;height:12px;background:#000080"></div>
<span class="t" style="left:157.30px;top:153.27px;font-size:11.5px;line-height:15.5px;letter-spacing:0.000px;color:#000;">T</span>
<span class="t" style="left:163.80px;top:153.27px;font-size:11.5px;line-height:15.5px;letter-spacing:0.000px;color:#fff;">e</span>
<div style="left:5px;top:172px;width:174px;height:1px;background:#a0a0a0"></div>
<div style="left:6px;top:173px;width:172px;height:478px;background:#fff;border-left:1px solid #a0a0a0;border-top:1px solid #a0a0a0"></div>
<div style="left:17px;top:191px;width:1px;height:24px;background-image:linear-gradient(to bottom,#808080 50%,transparent 50%);background-size:1px 2px"></div>
<div style="left:23px;top:185px;width:6px;height:1px;background-image:linear-gradient(to right,#808080 50%,transparent 50%);background-size:2px 1px"></div>
<div style="left:23px;top:221px;width:6px;height:1px;background-image:linear-gradient(to right,#808080 50%,transparent 50%);background-size:2px 1px"></div>
<div style="left:36px;top:192px;width:1px;height:11px;background-image:linear-gradient(to bottom,#808080 50%,transparent 50%);background-size:1px 2px"></div><div style="left:36px;top:203px;width:12px;height:1px;background-image:linear-gradient(to right,#808080 50%,transparent 50%);background-size:2px 1px"></div>
<div style="left:36px;top:228px;width:1px;height:11px;background-image:linear-gradient(to bottom,#808080 50%,transparent 50%);background-size:1px 2px"></div><div style="left:36px;top:239px;width:12px;height:1px;background-image:linear-gradient(to right,#808080 50%,transparent 50%);background-size:2px 1px"></div>
<svg style="left:12px;top:180px" width="11" height="11" viewBox="0 0 11 11"><rect x=".5" y=".5" width="10" height="10" rx="1.500" fill="#fff" stroke="#919191"/><rect x="1.500" y="5.500" width="8" height="4.500" fill="#e6e6e6"/><path d="M2.500 5.500h6" stroke="#3a52b4" stroke-width="1.200"/></svg>
<svg style="left:12px;top:216px" width="11" height="11" viewBox="0 0 11 11"><rect x=".5" y=".5" width="10" height="10" rx="1.500" fill="#fff" stroke="#919191"/><rect x="1.500" y="5.500" width="8" height="4.500" fill="#e6e6e6"/><path d="M2.500 5.500h6" stroke="#3a52b4" stroke-width="1.200"/></svg>
<svg style="left:30px;top:177px" width="12" height="15" viewBox="0 0 12 15"><rect x=".6" y="2.500" width="10.800" height="11.500" rx="1.200" fill="#fff" stroke="#000" stroke-width="1.100"/><path d="M3.500 2.500c0-2.500 5-2.500 5 0z" fill="#fff" stroke="#808080" stroke-width="1"/><path d="M2.800 8.500l2.500 3 4.700-6.500" fill="none" stroke="#000" stroke-width="1.300"/></svg>
<svg style="left:30px;top:213px" width="12" height="15" viewBox="0 0 12 15"><rect x=".6" y="2.500" width="10.800" height="11.500" rx="1.200" fill="#fff" stroke="#000" stroke-width="1.100"/><path d="M3.500 2.500c0-2.500 5-2.500 5 0z" fill="#fff" stroke="#808080" stroke-width="1"/><path d="M2.800 8.500l2.500 3 4.700-6.500" fill="none" stroke="#000" stroke-width="1.300"/></svg>
<svg style="left:49px;top:196px" width="13" height="14" viewBox="0 0 13 14" shape-rendering="crispEdges">
<defs><linearGradient id="cg11" x1="0" x2="1" y1="0" y2="0"><stop offset="0" stop-color="#666"/><stop offset=".5" stop-color="#c8c8c8"/><stop offset=".7" stop-color="#fff"/></linearGradient></defs>
<path d="M0 3.500h3M0 7h3M0 10.500h3M10 3.500h3M10 7h3M10 10.500h3" stroke="#000" stroke-width="1.600"/>
<rect x="3.250" y="1" width="6.500" height="12" fill="url(#cg11)" stroke="#000" stroke-width="1.600"/>
<rect x="5.500" y="0" width="2" height="1.800" fill="#fff"/></svg>
<svg style="left:49px;top:232px" width="13" height="14" viewBox="0 0 13 14" shape-rendering="crispEdges">
<defs><linearGradient id="cg12" x1="0" x2="1" y1="0" y2="0"><stop offset="0" stop-color="#666"/><stop offset=".5" stop-color="#c8c8c8"/><stop offset=".7" stop-color="#fff"/></linearGradient></defs>
<path d="M0 3.500h3M0 7h3M0 10.500h3M10 3.500h3M10 7h3M10 10.500h3" stroke="#000" stroke-width="1.600"/>
<rect x="3.250" y="1" width="6.500" height="12" fill="url(#cg12)" stroke="#000" stroke-width="1.600"/>
<rect x="5.500" y="0" width="2" height="1.800" fill="#fff"/></svg>
<span class="t" style="left:49.30px;top:174.80px;font-size:15px;line-height:19px;letter-spacing:0.912px;color:#000;">Int4lRouted</span>
<span class="t" style="left:68.30px;top:192.80px;font-size:15px;line-height:19px;letter-spacing:0.634px;color:#000;">Int_4l Routed</span>
<span class="t" style="left:50.30px;top:210.80px;font-size:15px;line-height:19px;letter-spacing:0.827px;color:#000;">RoundRouted</span>
<div style="left:66px;top:229px;width:111px;height:18px;background:#f0f0f0"></div>
<span class="t" style="left:69.30px;top:228.80px;font-size:15px;line-height:19px;letter-spacing:0.737px;color:#000;">Round Routed</span>
<div style="left:7px;top:631px;width:170px;height:20px;background:#f0f0f0"></div>
<svg style="left:14px;top:637px" width="5" height="8" viewBox="0 0 5 8"><path d="M5 0v8l-5-4z" fill="#505050"/></svg>
<svg style="left:163px;top:637px" width="5" height="8" viewBox="0 0 5 8"><path d="M0 0v8l5-4z" fill="#505050"/></svg>
<div style="left:30px;top:632px;width:124px;height:18px;border:1px solid #979797;border-radius:2px;background:linear-gradient(to bottom,#f3f3f3 0,#e9e9ea 45%,#d9dadc 50%,#cfd0d3 100%);box-shadow:inset 0 0 0 1px rgba(255,255,255,.6)"></div>
<svg style="left:87px;top:637px" width="9" height="8" viewBox="0 0 9 8" shape-rendering="crispEdges"><path d="M.5 0v8M3.500 0v8M6.500 0v8" stroke="#5c5c5c"/><path d="M1.500 0v8M4.500 0v8M7.500 0v8" stroke="#fff"/></svg>
<div style="left:64px;top:655px;width:48px;height:22px;border:1px solid;border-color:transparent #696969 #696969 #fff;border-radius:0 0 3px 3px;box-shadow:inset -1px -1px 0 #a0a0a0"></div>
<div style="left:5px;top:653px;width:59px;height:26px;background:#f0f0f0;border:1px solid;border-color:transparent #696969 #696969 #fff;border-radius:0 0 3px 3px;box-shadow:inset -1px -1px 0 #a0a0a0"></div>
<span class="t" style="left:11.30px;top:659.50px;font-size:13px;line-height:17px;letter-spacing:-0.137px;color:#000;">Projects</span>
<span class="t" style="left:69.30px;top:658.00px;font-size:13px;line-height:17px;letter-spacing:-0.404px;color:#000;">Layers</span>
<div style="left:191px;top:119px;width:1px;height:568px;background:#a0a0a0"></div>
<div style="left:190px;top:119px;width:1px;height:568px;background:#fff"></div>
<!-- mdi -->
<div style="left:196px;top:120px;width:1401px;height:7px;background:#b9d1ea;border-top:1px solid #f4f7fb;border-top-left-radius:6px"></div>
<div style="left:196px;top:121px;width:5px;height:295px;background:linear-gradient(to bottom,#b4cbe4 0,#c9dcee 12%,#d9e6f3 100%);border-left:1px solid #6e6e6e;border-bottom:1px solid #555;border-top-left-radius:6px;border-top:1px solid #6e6e6e"></div>
<div style="left:196px;top:416px;width:5px;height:234px;background:#a9a9a9"></div>
<div style="left:201px;top:127px;width:1396px;height:528px;background:#f0f0f0"></div>
<div style="left:1470px;top:120px;width:47px;height:3px;border:1px solid #7a8ea8;border-top:0;border-radius:0 0 3px 3px;background:#c5d7ec"></div>
<div style="left:1519px;top:120px;width:39px;height:3px;border:1px solid #7a8ea8;border-top:0;border-radius:0 0 3px 3px;background:#c5d7ec"></div>
<div style="left:1560px;top:120px;width:37px;height:3px;border-bottom:2px solid #5c1018;border-left:1px solid #5c1018;border-radius:0 0 0 3px;background:#d8705c"></div>
<div style="left:229px;top:131px;width:1350px;height:17px;background:#f0f0f0;border:1px solid;border-color:#8c8c8c #a0a0a0 #8c8c8c #8c8c8c"></div>
<div style="left:535px;top:132px;width:583px;height:15px;background:#fff;border-left:1px solid #6a6a6a"></div>
<svg style="left:229px;top:131px" width="1350" height="17" shape-rendering="crispEdges" fill="#000"><rect x="1" y="7" width="1" height="8"/><rect x="31" y="11" width="1" height="4"/><rect x="60" y="11" width="1" height="4"/><rect x="90" y="11" width="1" height="4"/><rect x="120" y="11" width="1" height="4"/><rect x="149" y="2" width="1" height="13"/><rect x="179" y="11" width="1" height="4"/><rect x="209" y="11" width="1" height="4"/><rect x="239" y="11" width="1" height="4"/><rect x="268" y="11" width="1" height="4"/><rect x="298" y="7" width="1" height="8"/><rect x="328" y="11" width="1" height="4"/><rect x="357" y="11" width="1" height="4"/><rect x="387" y="11" width="1" height="4"/><rect x="417" y="11" width="1" height="4"/><rect x="447" y="2" width="1" height="13"/><rect x="476" y="11" width="1" height="4"/><rect x="506" y="11" width="1" height="4"/><rect x="536" y="11" width="1" height="4"/><rect x="565" y="11" width="1" height="4"/><rect x="595" y="7" width="1" height="8"/><rect x="625" y="11" width="1" height="4"/><rect x="654" y="11" width="1" height="4"/><rect x="684" y="11" width="1" height="4"/><rect x="714" y="11" width="1" height="4"/><rect x="743" y="2" width="1" height="13"/><rect x="773" y="11" width="1" height="4"/><rect x="803" y="11" width="1" height="4"/><rect x="833" y="11" width="1" height="4"/><rect x="862" y="11" width="1" height="4"/><rect x="892" y="7" width="1" height="8"/><rect x="922" y="11" width="1" height="4"/><rect x="951" y="11" width="1" height="4"/><rect x="981" y="11" width="1" height="4"/><rect x="1011" y="11" width="1" height="4"/><rect x="1041" y="2" width="1" height="13"/><rect x="1070" y="11" width="1" height="4"/><rect x="1100" y="11" width="1" height="4"/><rect x="1130" y="11" width="1" height="4"/><rect x="1159" y="11" width="1" height="4"/><rect x="1189" y="7" width="1" height="8"/><rect x="1219" y="11" width="1" height="4"/><rect x="1248" y="11" width="1" height="4"/><rect x="1278" y="11" width="1" height="4"/><rect x="1308" y="11" width="1" height="4"/><rect x="1337" y="2" width="1" height="13"/></svg>
<div style="left:205px;top:154px;width:18px;height:5px;background:#fff;border:1px solid;border-color:#a0a0a0 #c8c8c8 #8c8c8c #a0a0a0"></div>
<div style="left:205px;top:159px;width:17px;height:492px;background:#fff;border-left:2px solid #8c8c8c;border-right:1px solid #e0e0e0"></div>
<svg style="left:205px;top:154px" width="17" height="497" shape-rendering="crispEdges" fill="#000"><rect x="7" y="11" width="8" height="1"/><rect x="11" y="40" width="4" height="1"/><rect x="11" y="70" width="4" height="1"/><rect x="11" y="100" width="4" height="1"/><rect x="11" y="129" width="4" height="1"/><rect x="2" y="159" width="13" height="1"/><rect x="11" y="189" width="4" height="1"/><rect x="11" y="218" width="4" height="1"/><rect x="11" y="248" width="4" height="1"/><rect x="11" y="278" width="4" height="1"/><rect x="7" y="307" width="8" height="1"/><rect x="11" y="337" width="4" height="1"/><rect x="11" y="367" width="4" height="1"/><rect x="11" y="396" width="4" height="1"/><rect x="11" y="426" width="4" height="1"/><rect x="2" y="456" width="13" height="1"/><rect x="11" y="485" width="4" height="1"/></svg>
<div style="left:228px;top:154px;width:1369px;height:2px;background:linear-gradient(to bottom,#a0a0a0,#696969)"></div>
<div style="left:228px;top:154px;width:2px;height:496px;background:linear-gradient(to right,#c0c0c0,#808080)"></div>
<div style="left:230px;top:156px;width:1348px;height:494px;background:#000;overflow:hidden"><svg style="left:0;top:0" width="1348" height="494" viewBox="230 156 1348 494">
<path d="M557 165.5h1M557 194.5h1M557 224.5h1M557 254.5h1M557 283.5h1M557 313.5h1M557 343.5h1M557 372.5h1M557 402.5h1M557 432.5h1M557 461.5h1M557 491.5h1M557 521.5h1M557 550.5h1M557 580.5h1M557 610.5h1M557 639.5h1M587 165.5h1M587 194.5h1M587 224.5h1M587 254.5h1M587 283.5h1M587 313.5h1M587 343.5h1M587 372.5h1M587 402.5h1M587 432.5h1M587 461.5h1M587 491.5h1M587 521.5h1M587 550.5h1M587 580.5h1M587 610.5h1M587 639.5h1M616 165.5h1M616 194.5h1M616 224.5h1M616 254.5h1M616 283.5h1M616 313.5h1M616 343.5h1M616 372.5h1M616 402.5h1M616 432.5h1M616 461.5h1M616 491.5h1M616 521.5h1M616 550.5h1M616 580.5h1M616 610.5h1M616 639.5h1M646 165.5h1M646 194.5h1M646 224.5h1M646 254.5h1M646 283.5h1M646 313.5h1M646 343.5h1M646 372.5h1M646 402.5h1M646 432.5h1M646 461.5h1M646 491.5h1M646 521.5h1M646 550.5h1M646 580.5h1M646 610.5h1M646 639.5h1M676 165.5h1M676 194.5h1M676 224.5h1M676 254.5h1M676 283.5h1M676 313.5h1M676 343.5h1M676 372.5h1M676 402.5h1M676 432.5h1M676 461.5h1M676 491.5h1M676 521.5h1M676 550.5h1M676 580.5h1M676 610.5h1M676 639.5h1M706 165.5h1M706 194.5h1M706 224.5h1M706 254.5h1M706 283.5h1M706 313.5h1M706 343.5h1M706 372.5h1M706 402.5h1M706 432.5h1M706 461.5h1M706 491.5h1M706 521.5h1M706 550.5h1M706 580.5h1M706 610.5h1M706 639.5h1M735 165.5h1M735 194.5h1M735 224.5h1M735 254.5h1M735 283.5h1M735 313.5h1M735 343.5h1M735 372.5h1M735 402.5h1M735 432.5h1M735 461.5h1M735 491.5h1M735 521.5h1M735 550.5h1M735 580.5h1M735 610.5h1M735 639.5h1M765 165.5h1M765 194.5h1M765 224.5h1M765 254.5h1M765 283.5h1M765 313.5h1M765 343.5h1M765 372.5h1M765 402.5h1M765 432.5h1M765 461.5h1M765 491.5h1M765 521.5h1M765 550.5h1M765 580.5h1M765 610.5h1M765 639.5h1M795 165.5h1M795 194.5h1M795 224.5h1M795 254.5h1M795 283.5h1M795 313.5h1M795 343.5h1M795 372.5h1M795 402.5h1M795 432.5h1M795 461.5h1M795 491.5h1M795 521.5h1M795 550.5h1M795 580.5h1M795 610.5h1M795 639.5h1M824 165.5h1M824 194.5h1M824 224.5h1M824 254.5h1M824 283.5h1M824 313.5h1M824 343.5h1M824 372.5h1M824 402.5h1M824 432.5h1M824 461.5h1M824 491.5h1M824 521.5h1M824 550.5h1M824 580.5h1M824 610.5h1M824 639.5h1M854 165.5h1M854 194.5h1M854 224.5h1M854 254.5h1M854 283.5h1M854 313.5h1M854 343.5h1M854 372.5h1M854 402.5h1M854 432.5h1M854 461.5h1M854 491.5h1M854 521.5h1M854 550.5h1M854 580.5h1M854 610.5h1M854 639.5h1M884 165.5h1M884 194.5h1M884 224.5h1M884 254.5h1M884 283.5h1M884 313.5h1M884 343.5h1M884 372.5h1M884 402.5h1M884 432.5h1M884 461.5h1M884 491.5h1M884 521.5h1M884 550.5h1M884 580.5h1M884 610.5h1M884 639.5h1M913 165.5h1M913 194.5h1M913 224.5h1M913 254.5h1M913 283.5h1M913 313.5h1M913 343.5h1M913 372.5h1M913 402.5h1M913 432.5h1M913 461.5h1M913 491.5h1M913 521.5h1M913 550.5h1M913 580.5h1M913 610.5h1M913 639.5h1M943 165.5h1M943 194.5h1M943 224.5h1M943 254.5h1M943 283.5h1M943 313.5h1M943 343.5h1M943 372.5h1M943 402.5h1M943 432.5h1M943 461.5h1M943 491.5h1M943 521.5h1M943 550.5h1M943 580.5h1M943 610.5h1M943 639.5h1M973 165.5h1M973 194.5h1M973 224.5h1M973 254.5h1M973 283.5h1M973 313.5h1M973 343.5h1M973 372.5h1M973 402.5h1M973 432.5h1M973 461.5h1M973 491.5h1M973 521.5h1M973 550.5h1M973 580.5h1M973 610.5h1M973 639.5h1M1002 165.5h1M1002 194.5h1M1002 224.5h1M1002 254.5h1M1002 283.5h1M1002 313.5h1M1002 343.5h1M1002 372.5h1M1002 402.5h1M1002 432.5h1M1002 461.5h1M1002 491.5h1M1002 521.5h1M1002 550.5h1M1002 580.5h1M1002 610.5h1M1002 639.5h1M1032 165.5h1M1032 194.5h1M1032 224.5h1M1032 254.5h1M1032 283.5h1M1032 313.5h1M1032 343.5h1M1032 372.5h1M1032 402.5h1M1032 432.5h1M1032 461.5h1M1032 491.5h1M1032 521.5h1M1032 550.5h1M1032 580.5h1M1032 610.5h1M1032 639.5h1M1062 165.5h1M1062 194.5h1M1062 224.5h1M1062 254.5h1M1062 283.5h1M1062 313.5h1M1062 343.5h1M1062 372.5h1M1062 402.5h1M1062 432.5h1M1062 461.5h1M1062 491.5h1M1062 521.5h1M1062 550.5h1M1062 580.5h1M1062 610.5h1M1062 639.5h1M1092 165.5h1M1092 194.5h1M1092 224.5h1M1092 254.5h1M1092 283.5h1M1092 313.5h1M1092 343.5h1M1092 372.5h1M1092 402.5h1M1092 432.5h1M1092 461.5h1M1092 491.5h1M1092 521.5h1M1092 550.5h1M1092 580.5h1M1092 610.5h1M1092 639.5h1" stroke="#8c8c8c" stroke-width="1" shape-rendering="crispEdges"/>
<path d="M674 313.5h5M676.5 311v5" stroke="#787878" stroke-width="1" shape-rendering="crispEdges"/>
<path d="M971 313.5h5M973.5 311v5" stroke="#787878" stroke-width="1" shape-rendering="crispEdges"/>
<path d="M971 610.5h5M973.5 608v5" stroke="#787878" stroke-width="1" shape-rendering="crispEdges"/>
<circle cx="827.700" cy="420.700" r="241.500" fill="none" stroke="#f0f000" stroke-width="1" shape-rendering="crispEdges"/>
<circle cx="655.3" cy="302.5" r="9.700" fill="none" stroke="#00008c" stroke-width="5" stroke-dasharray="13.400 1.840" stroke-dashoffset="-0.900"/>
<circle cx="1004.9" cy="308.5" r="9.700" fill="none" stroke="#00008c" stroke-width="5" stroke-dasharray="13.400 1.840" stroke-dashoffset="-0.900"/>
<circle cx="655.3" cy="540.5" r="9.700" fill="none" stroke="#00008c" stroke-width="5" stroke-dasharray="13.400 1.840" stroke-dashoffset="-0.900"/>
<circle cx="1004.9" cy="534.5" r="9.700" fill="none" stroke="#00008c" stroke-width="5" stroke-dasharray="13.400 1.840" stroke-dashoffset="-0.900"/>
<circle cx="654.5" cy="357.5" r="9.700" fill="none" stroke="#00008c" stroke-width="4.600"/>
<circle cx="654.5" cy="483.5" r="9.700" fill="none" stroke="#00008c" stroke-width="4.600"/>
<circle cx="1017.6" cy="366" r="9.700" fill="none" stroke="#00008c" stroke-width="4.600"/>
<circle cx="1017.6" cy="481.5" r="9.700" fill="none" stroke="#00008c" stroke-width="4.600"/>
<path d="M806.5 432.5L806.5 467.5 M830.5 239.5L726.5 239.5L724.5 241.5L724.5 295.5L722.5 297.5 M830.5 242.5L730.5 242.5L727.5 245.5L727.5 346.5L725.5 349.5 M673.5 360.5L673.5 271.5 M681.5 360.5L681.5 267.5 M670.5 261.5L672.5 259.5L685.5 259.5 M685.5 360.5L685.5 264.5L687.5 261.5L691.5 261.5 M709.5 360.5L709.5 262.5 M718.5 343.5L718.5 262.5L716.5 259.5 M692.5 275.5L692.5 352.5 M736.5 360.5L736.5 310.5L739.5 307.5L752.5 307.5 M733.5 360.5L733.5 283.5L752.5 283.5 M740.5 290.5L740.5 296.5L743.5 299.5L746.5 301.5L752.5 307.5 M748.5 324.5L752.5 319.5L830.5 319.5 M765.5 319.5L765.5 360.5 M747.5 313.5L743.5 318.5 M743.5 332.5L746.5 336.5L743.5 340.5 M746.5 348.5L752.5 352.5L756.5 356.5 M818.5 289.5L813.5 295.5L813.5 304.5L810.5 307.5 M818.5 277.5L822.5 280.5L822.5 283.5 M819.5 301.5L824.5 306.5 M752.5 247.5L749.5 250.5L743.5 257.5 M701.5 331.5L704.5 328.5L708.5 328.5 M792.5 343.5L792.5 360.5 M821.5 266.5L825.5 270.5 M830.5 239.5L955.5 239.5L958.5 242.5L958.5 280.5L964.5 286.5L976.5 286.5L979.5 289.5L979.5 360.5 M830.5 242.5L932.5 242.5L935.5 245.5L935.5 280.5L943.5 288.5L943.5 289.5 M837.5 271.5L908.5 271.5L914.5 265.5 M837.5 283.5L908.5 283.5L914.5 277.5 M837.5 295.5L908.5 295.5L914.5 289.5 M908.5 307.5L914.5 301.5 M839.5 247.5L840.5 251.5L842.5 254.5 M842.5 313.5L845.5 316.5L881.5 316.5L884.5 319.5L884.5 360.5 M890.5 322.5L890.5 360.5 M896.5 307.5L896.5 360.5 M905.5 360.5L905.5 319.5L908.5 316.5L914.5 313.5 M837.5 320.5L840.5 323.5L842.5 325.5 M943.5 337.5L943.5 360.5 M661.5 433.5L665.5 435.5L673.5 435.5L677.5 438.5L677.5 462.5L725.5 462.5 M635.5 417.5L635.5 426.5L639.5 429.5L645.5 429.5L650.5 433.5 M649.5 457.5L652.5 459.5L652.5 463.5L656.5 467.5L675.5 467.5L680.5 471.5L680.5 478.5L684.5 482.5L698.5 482.5 M686.5 415.5L686.5 453.5L683.5 456.5 M705.5 414.5L702.5 417.5L695.5 417.5L692.5 420.5L692.5 453.5 M706.5 396.5L706.5 488.5 M721.5 436.5L721.5 488.5 M726.5 459.5L730.5 456.5L730.5 403.5 M712.5 408.5L718.5 402.5L734.5 402.5L736.5 405.5L736.5 488.5 M724.5 408.5L730.5 414.5 M695.5 413.5L701.5 408.5 M740.5 417.5L740.5 488.5 M747.5 420.5L747.5 488.5 M753.5 420.5L753.5 432.5 M765.5 360.5L765.5 432.5 M767.5 488.5L767.5 375.5L770.5 372.5L786.5 372.5 M786.5 378.5L786.5 488.5 M792.5 360.5L792.5 390.5L796.5 393.5L815.5 393.5L818.5 396.5 M713.5 381.5L733.5 381.5L736.5 378.5L736.5 360.5 M799.5 488.5L799.5 477.5 M819.5 372.5L824.5 375.5 M819.5 384.5L823.5 387.5L826.5 387.5 M740.5 477.5L737.5 474.5 M862.5 420.5L862.5 429.5L865.5 432.5 M881.5 420.5L881.5 430.5L879.5 432.5 M884.5 360.5L884.5 409.5 M890.5 360.5L890.5 432.5 M896.5 360.5L896.5 438.5 M905.5 360.5L905.5 429.5L902.5 431.5 M834.5 369.5L834.5 423.5L842.5 432.5 M841.5 369.5L845.5 373.5L848.5 375.5L851.5 378.5L851.5 417.5L848.5 423.5L848.5 441.5 M872.5 426.5L872.5 456.5L869.5 458.5L850.5 458.5L848.5 461.5L848.5 483.5L851.5 485.5 M884.5 488.5L884.5 447.5L887.5 444.5L899.5 444.5L899.5 463.5L902.5 466.5 M896.5 450.5L896.5 483.5L894.5 485.5 M955.5 360.5L955.5 488.5 M944.5 360.5L944.5 366.5L948.5 369.5L952.5 369.5L955.5 372.5 M961.5 360.5L961.5 405.5L964.5 408.5 M973.5 444.5L973.5 432.5L974.5 430.5 M963.5 488.5L963.5 462.5L966.5 459.5L972.5 456.5 M1011.5 396.5L1006.5 402.5L1006.5 417.5L1010.5 422.5 M913.5 432.5L908.5 438.5L872.5 438.5 M830.5 426.5L834.5 426.5L841.5 432.5 M857.5 426.5L857.5 430.5L854.5 432.5 M979.5 360.5L979.5 488.5 M746.5 488.5L746.5 521.5L743.5 524.5L738.5 524.5L736.5 527.5 M752.5 488.5L752.5 518.5 M764.5 497.5L755.5 507.5 M759.5 515.5L755.5 518.5L751.5 520.5L750.5 567.5L747.5 570.5L740.5 570.5L737.5 573.5 M768.5 488.5L768.5 521.5L764.5 524.5L762.5 524.5L753.5 533.5 M730.5 592.5L730.5 555.5L736.5 551.5 M752.5 581.5L750.5 583.5L740.5 583.5L737.5 585.5 M786.5 542.5L786.5 590.5L784.5 592.5 M801.5 488.5L801.5 497.5 M795.5 503.5L791.5 506.5L786.5 506.5 M800.5 510.5L791.5 518.5 M742.5 592.5L753.5 592.5 M878.5 488.5L878.5 533.5L881.5 536.5L976.5 536.5L979.5 533.5L979.5 488.5 M854.5 488.5L854.5 521.5L849.5 526.5 M890.5 498.5L890.5 521.5L896.5 527.5 M756.5 366.5L756.5 432.5 M819.5 384.5L823.5 387.5L826.5 387.5L828.5 390.5L828.5 420.5 M819.5 372.5L822.5 375.5L834.5 375.5 M834.5 368.5L834.5 420.5 M842.5 372.5L844.5 375.5L848.5 375.5L851.5 378.5L851.5 420.5 M857.5 367.5L857.5 420.5 M861.5 355.5L863.5 357.5L863.5 420.5 M842.5 337.5L845.5 340.5L876.5 340.5L879.5 343.5L879.5 420.5 M877.5 331.5L881.5 334.5L881.5 420.5 M864.5 343.5L867.5 346.5L867.5 393.5 M848.5 366.5L851.5 369.5 M801.5 477.5L801.5 545.5 M673.5 330.5L673.5 403.5L671.5 405.5L662.5 405.5 M685.5 330.5L685.5 363.5L682.5 365.5 M677.5 416.5L674.5 417.5L662.5 417.5L661.5 420.5" fill="none" stroke="#00ff00" stroke-width="1" shape-rendering="crispEdges" style="mix-blend-mode:screen"/>
<path d="M762.5 488.5L830.5 488.5 M669.5 259.5L671.5 257.5L743.5 257.5 M718.5 259.5L807.5 259.5L812.5 262.5L816.5 262.5L824.5 269.5 M675.5 268.5L687.5 268.5L691.5 265.5L691.5 262.5 M709.5 262.5L743.5 262.5L753.5 271.5L830.5 271.5 M679.5 280.5L743.5 280.5L747.5 277.5L753.5 282.5 M638.5 360.5L638.5 325.5L641.5 322.5L673.5 322.5L676.5 319.5L676.5 283.5L679.5 280.5 M679.5 360.5L679.5 292.5L682.5 289.5L735.5 289.5 M738.5 289.5L746.5 289.5 M682.5 360.5L682.5 295.5L685.5 292.5L743.5 292.5L747.5 289.5L753.5 295.5L830.5 295.5 M709.5 360.5L709.5 301.5L712.5 298.5L720.5 298.5 M744.5 351.5L753.5 343.5L830.5 343.5 M700.5 349.5L704.5 352.5L710.5 352.5 M821.5 310.5L830.5 310.5 M819.5 323.5L824.5 319.5L830.5 319.5 M753.5 307.5L747.5 301.5L744.5 304.5 M753.5 319.5L747.5 313.5 M824.5 337.5L819.5 332.5 M842.5 265.5L837.5 271.5 M842.5 277.5L837.5 283.5 M842.5 289.5L837.5 295.5 M842.5 301.5L840.5 304.5L836.5 305.5L834.5 310.5L830.5 310.5 M837.5 319.5L908.5 319.5L914.5 325.5 M908.5 307.5L914.5 313.5 M837.5 343.5L842.5 349.5 M830.5 352.5L834.5 353.5L837.5 356.5L842.5 358.5 M938.5 343.5L941.5 346.5L941.5 360.5 M960.5 343.5L964.5 346.5L964.5 360.5 M638.5 360.5L638.5 400.5L641.5 405.5L646.5 405.5L650.5 409.5 M639.5 416.5L645.5 417.5L650.5 421.5 M712.5 408.5L716.5 411.5L716.5 417.5L720.5 420.5L830.5 420.5 M725.5 429.5L755.5 429.5L759.5 426.5 M743.5 378.5L786.5 378.5 M747.5 371.5L752.5 366.5L830.5 366.5 M700.5 432.5L700.5 444.5 M826.5 367.5L830.5 370.5 M819.5 432.5L824.5 439.5L830.5 441.5 M806.5 467.5L806.5 488.5 M682.5 360.5L682.5 366.5 M746.5 420.5L746.5 488.5 M726.5 480.5L726.5 488.5 M858.5 365.5L909.5 365.5 M853.5 371.5L908.5 371.5L913.5 376.5 M868.5 396.5L913.5 396.5 M830.5 420.5L881.5 420.5L884.5 423.5 M941.5 360.5L941.5 393.5L944.5 396.5L1003.5 396.5L1006.5 399.5L1006.5 405.5L1010.5 409.5 M964.5 360.5L964.5 390.5L967.5 393.5L1009.5 393.5L1011.5 396.5 M965.5 411.5L965.5 435.5L961.5 438.5L926.5 438.5 M845.5 463.5L842.5 466.5 M845.5 463.5L845.5 450.5L893.5 450.5 M846.5 441.5L935.5 441.5L937.5 443.5 M971.5 432.5L974.5 429.5L1005.5 429.5L1012.5 423.5L1034.5 423.5L1037.5 426.5L1037.5 488.5 M878.5 467.5L890.5 467.5L890.5 488.5 M830.5 363.5L834.5 366.5L840.5 369.5L843.5 372.5 M724.5 488.5L724.5 494.5L727.5 497.5L822.5 497.5L826.5 501.5L830.5 504.5 M730.5 555.5L730.5 509.5L753.5 509.5 M736.5 527.5L740.5 530.5L752.5 530.5L760.5 538.5L762.5 536.5L783.5 536.5 M736.5 539.5L742.5 545.5L783.5 545.5L786.5 542.5 M786.5 518.5L791.5 518.5 M783.5 536.5L783.5 513.5L786.5 509.5L830.5 509.5 M730.5 555.5L735.5 561.5 M890.5 497.5L893.5 500.5L1036.5 500.5L1036.5 488.5 M830.5 503.5L890.5 503.5L893.5 506.5L893.5 521.5L896.5 527.5 M830.5 506.5L878.5 506.5L881.5 509.5L881.5 524.5L884.5 527.5 M830.5 509.5L833.5 512.5L834.5 515.5L834.5 524.5L836.5 527.5 M742.5 365.5L747.5 359.5L751.5 355.5L825.5 355.5 M822.5 352.5L835.5 352.5L842.5 359.5 M819.5 360.5L822.5 363.5L827.5 363.5 M839.5 344.5L842.5 349.5 M837.5 363.5L840.5 369.5L843.5 373.5 M877.5 331.5L908.5 331.5L914.5 336.5 M861.5 355.5L907.5 355.5L914.5 349.5 M825.5 378.5L908.5 378.5L914.5 383.5 M677.5 374.5L676.5 375.5L658.5 375.5L655.5 378.5L655.5 390.5L652.5 392.5L649.5 393.5L649.5 396.5 M661.5 396.5L661.5 393.5L679.5 393.5L681.5 391.5" fill="none" stroke="#ff0000" stroke-width="1" shape-rendering="crispEdges" style="mix-blend-mode:screen"/>
<path d="M820.5 336.5L825.5 331.5L877.5 331.5 M794.5 343.5L838.5 343.5 M819.5 349.5L825.5 355.5L861.5 355.5 M835.5 366.5L848.5 366.5 M635.5 360.5L635.5 286.5L638.5 283.5L667.5 283.5L670.5 280.5L670.5 261.5 M685.5 259.5L715.5 259.5 M691.5 262.5L709.5 262.5 M752.5 283.5L830.5 283.5 M752.5 307.5L830.5 307.5 M830.5 335.5L824.5 335.5L819.5 339.5 M830.5 271.5L837.5 271.5 M830.5 283.5L837.5 283.5 M830.5 295.5L837.5 295.5 M830.5 307.5L908.5 307.5 M830.5 319.5L837.5 319.5 M635.5 360.5L635.5 415.5L635.5 417.5 M679.5 360.5L679.5 372.5 M830.5 369.5L849.5 366.5 M830.5 441.5L845.5 441.5 M884.5 420.5L884.5 438.5L908.5 438.5 M786.5 501.5L786.5 542.5 M890.5 488.5L890.5 498.5" fill="none" stroke="#ffff00" stroke-width="1" shape-rendering="crispEdges" style="mix-blend-mode:screen"/>
<path d="M926.5 360.5L926.5 463.5 M842.5 396.5L842.5 408.5 M926.5 254.5L926.5 360.5" fill="none" stroke="#00ff00" stroke-width="2" stroke-linejoin="round" shape-rendering="crispEdges" style="mix-blend-mode:screen"/>
<path d="M914.5 254.5L926.5 254.5 M701.5 271.5L695.5 272.5L692.5 275.5 M692.5 352.5L693.5 356.5L699.5 359.5 M746.5 396.5L746.5 408.5 M806.5 432.5L806.5 411.5L810.5 408.5 M700.5 360.5L700.5 371.5 M926.5 463.5L923.5 466.5L914.5 467.5L913.5 480.5L916.5 483.5 M945.5 412.5L945.5 456.5 M806.5 467.5L806.5 488.5 M700.5 503.5L700.5 586.5 M795.5 586.5L795.5 528.5L797.5 527.5L806.5 527.5L806.5 488.5 M917.5 488.5L917.5 523.5L914.5 526.5L908.5 527.5 M830.5 491.5L836.5 491.5 M830.5 477.5L830.5 490.5L837.5 490.5" fill="none" stroke="#00ff00" stroke-width="3" stroke-linejoin="round" shape-rendering="crispEdges" style="mix-blend-mode:screen"/>
<path d="M830.5 245.5L911.5 245.5L914.5 248.5L914.5 254.5 M818.5 254.5L818.5 248.5L821.5 245.5L830.5 245.5 M700.5 373.5L700.5 392.5L703.5 396.5L746.5 396.5 M746.5 408.5L808.5 408.5 M818.5 408.5L830.5 408.5 M649.5 444.5L652.5 447.5L658.5 447.5L664.5 444.5L797.5 444.5 M660.5 457.5L660.5 462.5L664.5 464.5L696.5 464.5L701.5 468.5L701.5 471.5L791.5 471.5L800.5 479.5L830.5 479.5 M806.5 467.5L819.5 467.5 M830.5 408.5L941.5 408.5 M866.5 456.5L937.5 456.5 M866.5 456.5L866.5 474.5L863.5 476.5L830.5 476.5 M945.5 456.5L945.5 474.5L948.5 476.5L980.5 476.5L981.5 474.5L981.5 462.5L985.5 458.5L1021.5 458.5L1024.5 455.5L1024.5 442.5 M700.5 488.5L700.5 503.5 M794.5 539.5L830.5 539.5 M700.5 464.5L700.5 488.5 M830.5 539.5L908.5 539.5L908.5 527.5" fill="none" stroke="#ff0000" stroke-width="3" stroke-linejoin="round" shape-rendering="crispEdges" style="mix-blend-mode:screen"/>
<path d="M808.5 408.5L818.5 408.5 M937.5 456.5L946.5 456.5 M830.5 467.5L830.5 478.5" fill="none" stroke="#ffff00" stroke-width="3" stroke-linejoin="round" shape-rendering="crispEdges" style="mix-blend-mode:screen"/>
<path d="M631.5 279.5L679.5 279.5L679.5 326.5L631.5 326.5L631.5 279.5 M598.5 334.5L664.5 334.5L664.5 507.5L598.5 507.5L598.5 334.5 M694.5 277.5L706.5 277.5L706.5 325.5L694.5 325.5L694.5 277.5 M691.5 343.5L733.5 343.5L733.5 355.5L691.5 355.5L691.5 343.5 M932.5 289.5L943.5 289.5L943.5 337.5L932.5 337.5L932.5 289.5 M955.5 289.5L967.5 289.5L967.5 337.5L955.5 337.5L955.5 289.5 M981.5 285.5L1029.5 285.5L1029.5 332.5L981.5 332.5L981.5 285.5 M1001.5 351.5L1062.5 351.5L1062.5 496.5L1001.5 496.5L1001.5 351.5 M932.5 352.5L979.5 352.5L979.5 417.5L932.5 417.5L932.5 352.5 M691.5 426.5L733.5 426.5L733.5 438.5L691.5 438.5L691.5 426.5 M688.5 450.5L724.5 450.5L724.5 461.5L688.5 461.5L688.5 450.5 M688.5 451.5L693.5 451.5L693.5 460.5L688.5 460.5L688.5 451.5 M688.5 473.5L736.5 473.5L736.5 485.5L688.5 485.5L688.5 473.5 M753.5 432.5L765.5 432.5L765.5 479.5L753.5 479.5L753.5 432.5 M631.5 516.5L679.5 516.5L679.5 564.5L631.5 564.5L631.5 516.5 M981.5 510.5L1029.5 510.5L1029.5 558.5L981.5 558.5L981.5 510.5 M929.5 485.5L970.5 485.5L970.5 497.5L929.5 497.5L929.5 485.5 M742.5 244.5L825.5 244.5L825.5 416.5L789.5 416.5A6.0 6.0 0 0 0 777.500 416.500L742.5 416.5L742.5 244.5 M837.5 244.5L920.5 244.5L920.5 416.5L884.5 416.5A6.0 6.0 0 0 0 872.500 416.500L837.5 416.5L837.5 244.5 M682.5 366.5L730.5 366.5L730.5 414.5L682.5 414.5L682.5 393.5A4.5 4.5 0 0 0 682.500 384.500L682.5 366.5 M801.5 426.5L920.5 426.5L920.5 473.5L801.5 473.5L801.5 456A6.0 6.0 0 0 0 801.500 444L801.5 426.5 M932.5 426.5L979.5 426.5L979.5 473.5L962.5 473.5A6.5 6.5 0 0 0 949.500 473.500L932.5 473.5L932.5 426.5 M825.5 485.5L920.5 485.5L920.5 533.5L825.5 533.5L825.5 515.5A6.0 6.0 0 0 0 825.500 503.500L825.5 485.5 M694.5 497.5L742.5 497.5L742.5 592.5L724.5 592.5A6.0 6.0 0 0 0 712.500 592.500L694.5 592.5L694.5 497.5 M753.5 497.5L802.5 497.5L802.5 592.5L784.5 592.5A6.5 6.5 0 0 0 771.500 592.500L753.5 592.5L753.5 497.5 M742.5 592.5L753.5 592.5" fill="none" stroke="#00ffff" stroke-width="1" shape-rendering="crispEdges" style="mix-blend-mode:screen"/>
<path d="M700.5 301.5L714.5 350.5 M714.5 350.5L773.5 359.5 M782.5 330.5L794.5 360.5 M938.5 313.5L933.5 337.5L930.5 360.5 M962.5 313.5L918.5 360.5 M878.5 330.5L839.5 360.5 M632.5 421.5L720.5 375.5 M706.5 390.5L750.5 408.5 M717.5 360.5L720.5 375.5 M713.5 432.5L767.5 454.5 M710.5 456.5L725.5 432.5 M713.5 480.5L761.5 456.5 M774.5 360.5L806.5 366.5 M759.5 456.5L769.5 464.5 M954.5 384.5L857.5 417.5 M957.5 417.5L1032.5 423.5 M857.5 417.5L860.5 450.5 M926.5 438.5L947.5 488.5 M916.5 450.5L954.5 450.5 M753.5 488.5L718.5 545.5 M782.5 488.5L777.5 545.5 M846.5 488.5L872.5 509.5" fill="none" stroke="#c8964a" stroke-width="1" style="mix-blend-mode:screen"/>
<rect x="678.5" y="262.5" width="4" height="4" fill="none" stroke="#1a1aff" stroke-width="1" shape-rendering="crispEdges"/><rect x="680.0" y="264.0" width="1" height="1" fill="#e8c800"/>
<rect x="672.5" y="268.5" width="4" height="4" fill="none" stroke="#1a1aff" stroke-width="1" shape-rendering="crispEdges"/><rect x="674.0" y="270.0" width="1" height="1" fill="#e8c800"/>
<rect x="720.5" y="295.5" width="4" height="4" fill="none" stroke="#1a1aff" stroke-width="1" shape-rendering="crispEdges"/><rect x="722.0" y="297.0" width="1" height="1" fill="#e8c800"/>
<rect x="735.5" y="286.5" width="4" height="4" fill="none" stroke="#1a1aff" stroke-width="1" shape-rendering="crispEdges"/><rect x="737.0" y="288.0" width="1" height="1" fill="#e8c800"/>
<rect x="888.5" y="318.5" width="4" height="4" fill="none" stroke="#1a1aff" stroke-width="1" shape-rendering="crispEdges"/><rect x="890.0" y="320.0" width="1" height="1" fill="#e8c800"/>
<rect x="785.5" y="375.5" width="4" height="4" fill="none" stroke="#1a1aff" stroke-width="1" shape-rendering="crispEdges"/><rect x="787.0" y="377.0" width="1" height="1" fill="#e8c800"/>
<rect x="720.5" y="477.5" width="4" height="4" fill="none" stroke="#1a1aff" stroke-width="1" shape-rendering="crispEdges"/><rect x="722.0" y="479.0" width="1" height="1" fill="#e8c800"/>
<rect x="856.5" y="363.5" width="4" height="4" fill="none" stroke="#1a1aff" stroke-width="1" shape-rendering="crispEdges"/><rect x="858.0" y="365.0" width="1" height="1" fill="#e8c800"/>
<rect x="851.5" y="369.5" width="4" height="4" fill="none" stroke="#1a1aff" stroke-width="1" shape-rendering="crispEdges"/><rect x="853.0" y="371.0" width="1" height="1" fill="#e8c800"/>
<rect x="866.5" y="393.5" width="4" height="4" fill="none" stroke="#1a1aff" stroke-width="1" shape-rendering="crispEdges"/><rect x="868.0" y="395.0" width="1" height="1" fill="#e8c800"/>
<rect x="891.5" y="446.5" width="4" height="4" fill="none" stroke="#1a1aff" stroke-width="1" shape-rendering="crispEdges"/><rect x="893.0" y="448.0" width="1" height="1" fill="#e8c800"/>
<rect x="726.5" y="486.5" width="4" height="4" fill="none" stroke="#1a1aff" stroke-width="1" shape-rendering="crispEdges"/><rect x="728.0" y="488.0" width="1" height="1" fill="#e8c800"/>
<path d="M942.5 404.0l4.500 4.500-4.500 4.500-4.500-4.500z" fill="#00008c" stroke="#1414ff" stroke-width="1"/><circle cx="942.5" cy="408.5" r="1.200" fill="#f0a"/>
<path d="M966.5 404.0l4.500 4.500-4.500 4.500-4.500-4.500z" fill="#00008c" stroke="#1414ff" stroke-width="1"/><circle cx="966.5" cy="408.5" r="1.200" fill="#f0a"/>
<path d="M955.5 357.0l4.500 4.500-4.500 4.500-4.500-4.500z" fill="#00008c" stroke="#1414ff" stroke-width="1"/><circle cx="955.5" cy="361.5" r="1.200" fill="#f0a"/>
<circle cx="722.5" cy="375.5" r="1.800" fill="none" stroke="#c8964a" stroke-width="1"/>
<circle cx="751.5" cy="407.5" r="1.800" fill="none" stroke="#c8964a" stroke-width="1"/>
<circle cx="767.5" cy="454.5" r="1.800" fill="none" stroke="#c8964a" stroke-width="1"/>
<circle cx="769.5" cy="464.5" r="1.800" fill="none" stroke="#c8964a" stroke-width="1"/>
<circle cx="757.5" cy="480.5" r="1.800" fill="none" stroke="#c8964a" stroke-width="1"/>
<circle cx="780.5" cy="484.5" r="1.800" fill="none" stroke="#c8964a" stroke-width="1"/>
<circle cx="821.5" cy="469.5" r="1.800" fill="none" stroke="#c8964a" stroke-width="1"/>
<circle cx="799.5" cy="368.5" r="1.800" fill="none" stroke="#c8964a" stroke-width="1"/>
<circle cx="805.5" cy="365.5" r="1.800" fill="none" stroke="#c8964a" stroke-width="1"/>
<circle cx="853.5" cy="419.5" r="1.800" fill="none" stroke="#c8964a" stroke-width="1"/>
<circle cx="957.5" cy="417.5" r="1.800" fill="none" stroke="#c8964a" stroke-width="1"/>
<circle cx="912.5" cy="365.5" r="1.800" fill="none" stroke="#c8964a" stroke-width="1"/>
<circle cx="773.5" cy="359.5" r="1.800" fill="none" stroke="#c8964a" stroke-width="1"/>
<circle cx="929.5" cy="363.5" r="1.800" fill="none" stroke="#c8964a" stroke-width="1"/>
<circle cx="831.5" cy="396.5" r="1.800" fill="none" stroke="#c8964a" stroke-width="1"/>
<circle cx="676.500" cy="610.500" r="4" fill="none" stroke="#fff" stroke-width="1.200"/><path d="M668 610.500h17M676.500 602v17" stroke="#fff" stroke-width="1.200"/>
<path d="M794.500 194l8-2 3 3 7-3-3 9-6 4-7 7 1-10z" fill="#1e78f0"/>
<g font-family="'Liberation Mono',monospace" font-size="11.5" fill="#00ffff" text-anchor="middle">
<text transform="translate(655.3 302.5) rotate(90)" y="3.800">H1</text>
<text transform="translate(1004.9 308.5) rotate(90)" y="3.800">H2</text>
<text transform="translate(1004.9 534.5) rotate(90)" y="3.800">H3</text>
<text transform="translate(655.3 540.5) rotate(-90)" y="3.800">H4</text>
<text transform="translate(613.5 422) rotate(-90)" y="3.800">JP1</text>
<text transform="translate(701 302.5) rotate(-90)" y="3.800">R3</text>
<text transform="translate(712 349.5) rotate(0)" y="3.800">C2</text>
<text transform="translate(771 331) rotate(-90)" y="3.800">U2</text>
<text transform="translate(866 331) rotate(-90)" y="3.800">U1</text>
<text transform="translate(937.5 313.8) rotate(-90)" y="3.800">R1</text>
<text transform="translate(961.8 313.8) rotate(-90)" y="3.800">R4</text>
<text transform="translate(705.6 384) rotate(0)" y="3.800">U3</text>
<text transform="translate(712.3 432) rotate(0)" y="3.800">C3</text>
<text transform="translate(708 456) rotate(0)" y="3.800">D1</text>
<text transform="translate(712.3 479.5) rotate(0)" y="3.800">R2</text>
<text transform="translate(759.6 456) rotate(-90)" y="3.800">R5</text>
<text transform="translate(955.3 391.8) rotate(0)" y="3.800">P2</text>
<text transform="translate(950 450) rotate(-90)" y="3.800">U4</text>
<text transform="translate(860 443.3) rotate(0)" y="3.800">U6</text>
<text transform="translate(1047.6 420.8) rotate(90)" y="3.800">P1</text>
<text transform="translate(872 503) rotate(0)" y="3.800">U5</text>
<text transform="translate(949.3 492) rotate(0)" y="3.800">C1</text>
<text transform="translate(712.3 545.8) rotate(-90)" y="3.800">RPACK1</text>
<text transform="translate(771.6 545) rotate(-90)" y="3.800">DSW1</text>
</g>
<g font-family="'Liberation Sans',sans-serif" font-weight="bold" font-style="italic" fill="#fff" stroke="#fff" stroke-width=".25" font-size="8.300"><text x="814" y="199.300" textLength="40.500" lengthAdjust="spacingAndGlyphs">NATIONAL</text><text x="811" y="208.200" textLength="58" lengthAdjust="spacingAndGlyphs">INSTRUMENTS</text></g>
</svg></div>
<div style="left:1578px;top:156px;width:19px;height:494px;background:linear-gradient(to right,#e6e6e6 0,#f0f0f0 30%,#f0f0f0 100%)"></div>
<svg style="left:1584px;top:164px" width="9" height="5" viewBox="0 0 9 5"><path d="M0 5l4.500-5 4.500 5z" fill="#404040"/></svg>
<svg style="left:1584px;top:641px" width="9" height="5" viewBox="0 0 9 5"><path d="M0 0l4.500 5 4.500-5z" fill="#404040"/></svg>
<div style="left:1579px;top:304px;width:17px;height:191px;border:1px solid #979797;border-radius:2px;background:linear-gradient(to right,#f3f3f3 0,#e9e9ea 45%,#d9dadc 50%,#cfd0d3 100%);box-shadow:inset 0 0 0 1px rgba(255,255,255,.6)"></div>
<svg style="left:1583px;top:395px" width="9" height="9" viewBox="0 0 9 9" shape-rendering="crispEdges"><path d="M0 .5h9M0 3.500h9M0 6.500h9" stroke="#5c5c5c"/><path d="M0 1.500h9M0 4.500h9M0 7.500h9" stroke="#fff"/></svg>
<div style="left:192px;top:655px;width:1407px;height:1px;background:#a0a0a0"></div>
<div style="left:192px;top:656px;width:1407px;height:1px;background:#fff"></div>
<div style="left:196px;top:656px;width:120px;height:25px;border:1px solid;border-color:transparent #696969 #696969 #fff;border-radius:0 0 4px 4px;box-shadow:inset -1px -1px 0 #a0a0a0"></div>
<div style="left:316px;top:655px;width:125px;height:28px;background:#f0f0f0;border:1px solid;border-color:transparent #696969 #696969 #fff;border-radius:0 0 4px 4px;box-shadow:inset -1px -1px 0 #a0a0a0"></div>
<svg style="left:201.5px;top:660px" width="14" height="15" viewBox="0 0 14 15" shape-rendering="crispEdges">
<defs><linearGradient id="cg21" x1="0" x2="1" y1="0" y2="0"><stop offset="0" stop-color="#666"/><stop offset=".5" stop-color="#c8c8c8"/><stop offset=".7" stop-color="#fff"/></linearGradient></defs>
<path d="M0 4h3M0 7.500h3M0 11h3M11 4h3M11 7.500h3M11 11h3" stroke="#000" stroke-width="1.600"/>
<rect x="3.500" y="1" width="7" height="13" fill="url(#cg21)" stroke="#000" stroke-width="1.600"/>
<rect x="6" y="0" width="2" height="1.800" fill="#f0f0f0"/></svg>
<svg style="left:322px;top:662px" width="14" height="15" viewBox="0 0 14 15" shape-rendering="crispEdges">
<defs><linearGradient id="cg22" x1="0" x2="1" y1="0" y2="0"><stop offset="0" stop-color="#666"/><stop offset=".5" stop-color="#c8c8c8"/><stop offset=".7" stop-color="#fff"/></linearGradient></defs>
<path d="M0 4h3M0 7.500h3M0 11h3M11 4h3M11 7.500h3M11 11h3" stroke="#000" stroke-width="1.600"/>
<rect x="3.500" y="1" width="7" height="13" fill="url(#cg22)" stroke="#000" stroke-width="1.600"/>
<rect x="6" y="0" width="2" height="1.800" fill="#f0f0f0"/></svg>
<span class="t" style="left:223.30px;top:658.80px;font-size:15px;line-height:19px;letter-spacing:-0.074px;color:#000;">Int_4l Routed</span>
<span class="t" style="left:344.30px;top:659.80px;font-size:15px;line-height:19px;letter-spacing:-0.354px;color:#000;">Round Routed</span>
<div class="rais" style="left:1567px;top:663px;width:15px;height:15px;"></div><div class="rais" style="left:1582px;top:663px;width:15px;height:15px;"></div>
<svg style="left:1572px;top:667px" width="4" height="7" viewBox="0 0 4 7"><path d="M4 0v7l-4-3.500z" fill="#000080"/></svg>
<svg style="left:1588px;top:667px" width="4" height="7" viewBox="0 0 4 7"><path d="M0 0v7l4-3.500z" fill="#000080"/></svg>
<!-- pcb -->

<!-- bottom -->
<div style="left:0px;top:682px;width:192px;height:1px;background:#fff"></div>
<div style="left:0px;top:687px;width:1599px;height:1px;background:#a0a0a0"></div>
<div style="left:0px;top:688px;width:1599px;height:1px;background:#fff"></div>
<div class="rais" style="left:5px;top:690px;width:14px;height:13px;"></div><div class="rais" style="left:5px;top:707px;width:14px;height:13px;"></div>
<svg style="left:8px;top:693px" width="7" height="7" viewBox="0 0 7 7"><path d="M1 1l5 5M6 1l-5 5" stroke="#000" stroke-width="1.700"/></svg>
<svg style="left:10px;top:710px" width="4" height="7" viewBox="0 0 4 7"><path d="M0 0v7l4-3.500z" fill="#a0a0a0"/></svg>
<div style="left:2px;top:723px;width:21px;height:100px;background:linear-gradient(to top,#b5cae3 0,#c3d5ea 55%,#d8e4f1 100%)"></div>
<span class="t" style="left:4.500px;top:820px;transform-origin:0 0;transform:rotate(-90deg);font-family:'Liberation Mono',monospace;font-size:13px;line-height:15px;letter-spacing:0;color:#5a6a80">Spreadsheet</span>
<div style="left:27px;top:694px;width:1568px;height:104px;border:1px solid;border-color:#a0a0a0 #fff #fff #a0a0a0"></div>
<div style="left:28px;top:695px;width:1566px;height:102px;border:1px solid;border-color:#696969 #a0a0a0 #a0a0a0 #696969;background:#fff"></div>
<span class="t" style="left:36.30px;top:699.80px;font-size:15px;line-height:19px;letter-spacing:0.687px;color:#000;">Ultiboard  -  2025-12-11 23:37:39</span>
<div style="left:30px;top:775px;width:1560px;height:20px;background:#f0f0f0"></div>
<svg style="left:36px;top:780px" width="5" height="8" viewBox="0 0 5 8"><path d="M5 0v8l-5-4z" fill="#505050"/></svg>
<svg style="left:1575px;top:780px" width="5" height="8" viewBox="0 0 5 8"><path d="M0 0v8l5-4z" fill="#505050"/></svg>
<div style="left:52px;top:776px;width:1514px;height:18px;border:1px solid #979797;border-radius:2px;background:linear-gradient(to bottom,#f3f3f3 0,#e9e9ea 45%,#d9dadc 50%,#cfd0d3 100%);box-shadow:inset 0 0 0 1px rgba(255,255,255,.6)"></div>
<svg style="left:803px;top:781px" width="9" height="8" viewBox="0 0 9 8" shape-rendering="crispEdges"><path d="M.5 0v8M3.500 0v8M6.500 0v8" stroke="#5c5c5c"/><path d="M1.500 0v8M4.500 0v8M7.500 0v8" stroke="#fff"/></svg>
<div style="left:82px;top:799px;width:46px;height:22px;border:1px solid;border-color:transparent #696969 #696969 #fff;border-radius:0 0 3px 3px;box-shadow:inset -1px -1px 0 #a0a0a0"></div>
<span class="t" style="left:87.30px;top:801.50px;font-size:13px;line-height:17px;letter-spacing:-1.638px;color:#000;">DRC</span>
<div style="left:130px;top:799px;width:46px;height:22px;border:1px solid;border-color:transparent #696969 #696969 #fff;border-radius:0 0 3px 3px;box-shadow:inset -1px -1px 0 #a0a0a0"></div>
<span class="t" style="left:135.30px;top:801.50px;font-size:13px;line-height:17px;letter-spacing:-0.335px;color:#000;">Parts</span>
<div style="left:178px;top:799px;width:76px;height:22px;border:1px solid;border-color:transparent #696969 #696969 #fff;border-radius:0 0 3px 3px;box-shadow:inset -1px -1px 0 #a0a0a0"></div>
<span class="t" style="left:183.30px;top:801.50px;font-size:13px;line-height:17px;letter-spacing:-0.308px;color:#000;">Part Groups</span>
<div style="left:256px;top:799px;width:46px;height:22px;border:1px solid;border-color:transparent #696969 #696969 #fff;border-radius:0 0 3px 3px;box-shadow:inset -1px -1px 0 #a0a0a0"></div>
<span class="t" style="left:262.30px;top:801.50px;font-size:13px;line-height:17px;letter-spacing:-0.577px;color:#000;">Nets</span>
<div style="left:305px;top:799px;width:73px;height:22px;border:1px solid;border-color:transparent #696969 #696969 #fff;border-radius:0 0 3px 3px;box-shadow:inset -1px -1px 0 #a0a0a0"></div>
<span class="t" style="left:310.30px;top:801.50px;font-size:13px;line-height:17px;letter-spacing:-0.386px;color:#000;">Net Groups</span>
<div style="left:380px;top:799px;width:67px;height:22px;border:1px solid;border-color:transparent #696969 #696969 #fff;border-radius:0 0 3px 3px;box-shadow:inset -1px -1px 0 #a0a0a0"></div>
<span class="t" style="left:386.30px;top:801.50px;font-size:13px;line-height:17px;letter-spacing:-0.669px;color:#000;">SMT Pads</span>
<div style="left:449px;top:799px;width:65px;height:22px;border:1px solid;border-color:transparent #696969 #696969 #fff;border-radius:0 0 3px 3px;box-shadow:inset -1px -1px 0 #a0a0a0"></div>
<span class="t" style="left:455.30px;top:801.50px;font-size:13px;line-height:17px;letter-spacing:-0.645px;color:#000;">THT Pads</span>
<div style="left:516px;top:799px;width:46px;height:22px;border:1px solid;border-color:transparent #696969 #696969 #fff;border-radius:0 0 3px 3px;box-shadow:inset -1px -1px 0 #a0a0a0"></div>
<span class="t" style="left:522.80px;top:801.50px;font-size:13px;line-height:17px;letter-spacing:-0.851px;color:#000;">Vias</span>
<div style="left:564px;top:799px;width:88px;height:22px;border:1px solid;border-color:transparent #696969 #696969 #fff;border-radius:0 0 3px 3px;box-shadow:inset -1px -1px 0 #a0a0a0"></div>
<span class="t" style="left:570.30px;top:801.50px;font-size:13px;line-height:17px;letter-spacing:-0.292px;color:#000;">Copper Areas</span>
<div style="left:654px;top:799px;width:121px;height:22px;border:1px solid;border-color:transparent #696969 #696969 #fff;border-radius:0 0 3px 3px;box-shadow:inset -1px -1px 0 #a0a0a0"></div>
<span class="t" style="left:659.30px;top:801.50px;font-size:13px;line-height:17px;letter-spacing:-0.187px;color:#000;">Keep-ins/Keep-outs</span>
<div style="left:778px;top:799px;width:72px;height:22px;border:1px solid;border-color:transparent #696969 #696969 #fff;border-radius:0 0 3px 3px;box-shadow:inset -1px -1px 0 #a0a0a0"></div>
<span class="t" style="left:782.30px;top:801.50px;font-size:13px;line-height:17px;letter-spacing:-0.707px;color:#000;">PCB Layers</span>
<div style="left:852px;top:799px;width:87px;height:22px;border:1px solid;border-color:transparent #696969 #696969 #fff;border-radius:0 0 3px 3px;box-shadow:inset -1px -1px 0 #a0a0a0"></div>
<span class="t" style="left:857.30px;top:801.50px;font-size:13px;line-height:17px;letter-spacing:-0.190px;color:#000;">Parts Position</span>
<div style="left:942px;top:799px;width:60px;height:22px;border:1px solid;border-color:transparent #696969 #696969 #fff;border-radius:0 0 3px 3px;box-shadow:inset -1px -1px 0 #a0a0a0"></div>
<span class="t" style="left:947.80px;top:801.50px;font-size:13px;line-height:17px;letter-spacing:-0.279px;color:#000;">Statistics</span>
<div style="left:28px;top:796px;width:54px;height:27px;background:#f0f0f0;border:1px solid;border-color:transparent #696969 #696969 #fff;border-radius:0 0 3px 3px;box-shadow:inset -1px -1px 0 #a0a0a0"></div>
<span class="t" style="left:34.30px;top:803.50px;font-size:13px;line-height:17px;letter-spacing:-0.391px;color:#000;">Results</span>
<!-- status -->
<div style="left:0px;top:829px;width:1599px;height:1px;background:#a0a0a0"></div>
<div style="left:0px;top:830px;width:1599px;height:1px;background:#fff"></div>
<div style="left:0px;top:831px;width:1599px;height:21px;background:#f0edec"></div>
<span class="t" style="left:2.30px;top:832.38px;font-size:15.5px;line-height:19.5px;letter-spacing:0.134px;color:#000;">For Help, press F1</span>
<div style="left:1199px;top:832px;width:1px;height:19px;background:#c8c4c2"></div>
<div style="left:1287px;top:832px;width:1px;height:19px;background:#c8c4c2"></div>
<div style="left:1375px;top:832px;width:1px;height:19px;background:#c8c4c2"></div>
<div style="left:1463px;top:832px;width:1px;height:19px;background:#c8c4c2"></div>
<div style="left:1551px;top:832px;width:1px;height:19px;background:#c8c4c2"></div>
<span class="t" style="left:1116.80px;top:832.80px;font-size:15px;line-height:19px;letter-spacing:0.000px;color:#000;">-</span>
<span class="t" style="left:1205.30px;top:832.80px;font-size:15px;line-height:19px;letter-spacing:0.000px;color:#000;">-</span>
<span class="t" style="left:1293.30px;top:832.80px;font-size:15px;line-height:19px;letter-spacing:0.000px;color:#000;">-</span>
<span class="t" style="left:1381.30px;top:832.80px;font-size:15px;line-height:19px;letter-spacing:0.000px;color:#000;">-</span>
<span class="t" style="left:1469.30px;top:832.80px;font-size:15px;line-height:19px;letter-spacing:0.000px;color:#000;">-</span>
<span class="t" style="left:1556.80px;top:832.38px;font-size:15.5px;line-height:19.5px;letter-spacing:0.822px;color:#000;">mil</span>
<div style="left:0px;top:852px;width:1599px;height:3px;background:linear-gradient(to right,#1f4f8a 0,#2a5d9c 15%,#3a70ae 40%,#5d92c6 60%,#6ea0cf 100%)"></div>
<div style="left:72px;top:852px;width:62px;height:3px;border:1px solid #b8cde6;border-bottom:0;border-radius:2px 2px 0 0;background:rgba(160,190,225,.55)"></div>
<div style="left:142px;top:852px;width:64px;height:3px;border:1px solid #b8cde6;border-bottom:0;border-radius:2px 2px 0 0;background:rgba(160,190,225,.55)"></div>
<div style="left:211px;top:852px;width:64px;height:3px;border:1px solid #b8cde6;border-bottom:0;border-radius:2px 2px 0 0;background:rgba(160,190,225,.55)"></div>
<div style="left:281px;top:852px;width:64px;height:3px;border:1px solid #b8cde6;border-bottom:0;border-radius:2px 2px 0 0;background:rgba(160,190,225,.55)"></div>
</body></html>
